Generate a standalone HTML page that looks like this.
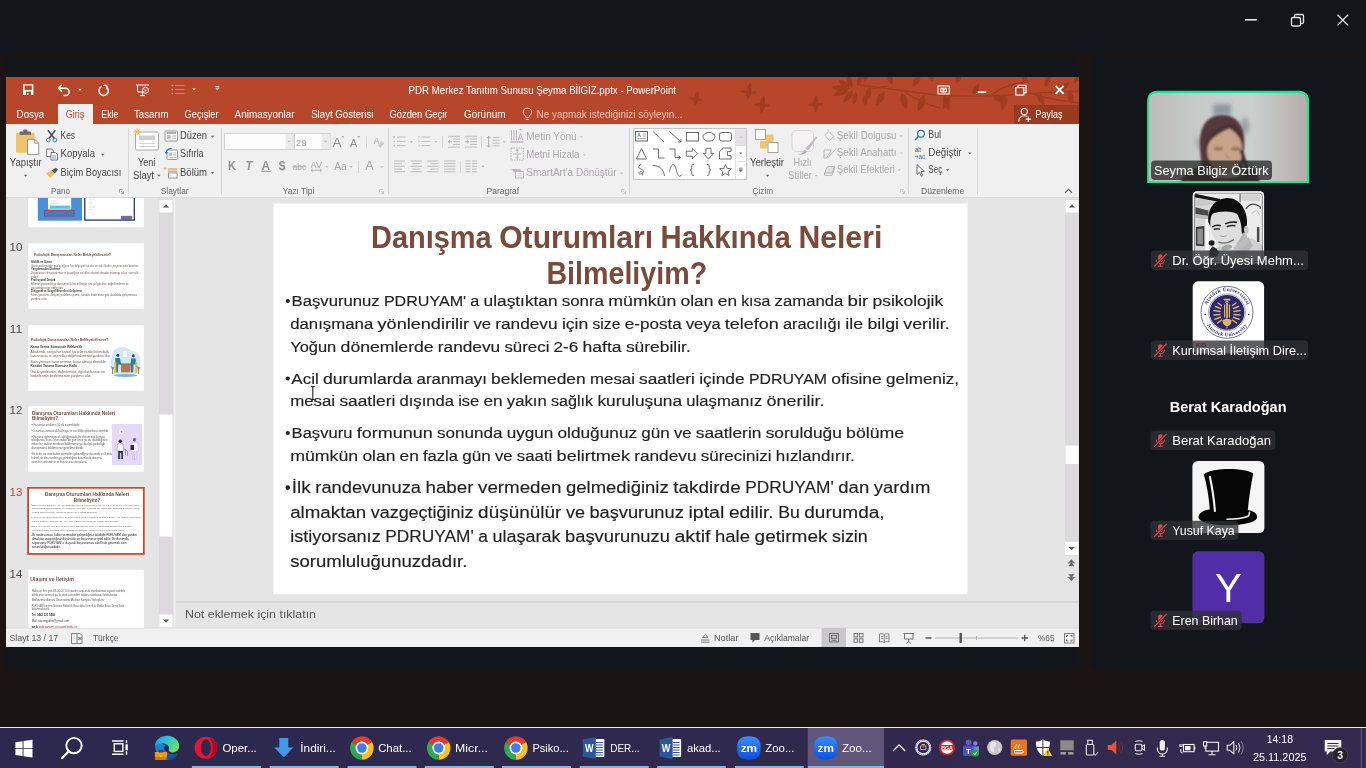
<!DOCTYPE html>
<html lang="tr">
<head>
<meta charset="utf-8">
<title>Zoom Toplantısı</title>
<style>
html,body{margin:0;padding:0;background:#1a1513;}
body{width:1366px;height:768px;overflow:hidden;position:relative;font-family:"Liberation Sans",sans-serif;}
svg#s{position:absolute;left:0;top:0;width:1366px;height:768px;display:block;will-change:transform;font-family:"Liberation Sans",sans-serif;font-size:10.100px;fill:#444;}
text{white-space:pre;}
.ui{fill:#444;}
.dis{fill:#a9a7a9;}
.w{fill:#fff;}
.grp{fill:#666;font-size:11px;}
.nm{fill:#fff;font-size:13.5px;}
.tb{fill:#fff;font-size:14.5px;}
.body{fill:#1c1c1c;}
.ttl{fill:#7a4a3c;font-weight:bold;}
</style>
</head>
<body>
<svg id="s" width="1366" height="768" viewBox="0 0 1366 768">
<!-- base -->
<rect x="0" y="0" width="1366" height="768" fill="#1a1513"/>
<rect x="0" y="0" width="1366" height="52" fill="#12161a"/>
<rect x="6" y="56" width="1073" height="612.800" fill="#12161a"/>
<rect x="1091" y="56" width="275" height="612.800" fill="#12161a"/>
<!-- zoom window controls -->
<g stroke="#e6e6e6" stroke-width="1.3" fill="none">
<line x1="1245" y1="19.8" x2="1257" y2="19.8" stroke-width="1.6"/>
<rect x="1291.5" y="17.5" width="9" height="8.5" rx="1.5"/>
<path d="M1294.5 17.5v-1.5a1.5 1.5 0 0 1 1.5-1.5h6a1.5 1.5 0 0 1 1.5 1.5v6a1.5 1.5 0 0 1-1.5 1.5h-1.5"/>
<path d="M1337.5 14.8l10.6 10.6M1348.1 14.8l-10.6 10.6"/>
</g>
<!-- PowerPoint window base -->
<rect x="6" y="77" width="1073" height="47" fill="#b7472a"/>
<rect x="6" y="124" width="1073" height="74" fill="#f1f0f1"/>
<rect x="6" y="197" width="1073" height="1" fill="#dadada"/>
<rect x="6" y="198" width="1073" height="430" fill="#e5e5e5"/>
<rect x="6" y="628" width="1073" height="19" fill="#f1f0f1"/>
<!-- Share button bg -->
<rect x="1014" y="105" width="65" height="19" fill="#99391f"/>
<!-- active tab -->
<rect x="58" y="104" width="35" height="21" fill="#f1f0f1"/>
<!-- tabs text -->
<g class="w" font-size="10.300">
<text x="16.6" y="118" textLength="27.6" lengthAdjust="spacingAndGlyphs" class="w">Dosya</text>
<text x="65.8" y="118" textLength="18.6" lengthAdjust="spacingAndGlyphs" style="fill:#b7472a">Giriş</text>
<text x="101.3" y="118" textLength="17" lengthAdjust="spacingAndGlyphs" class="w">Ekle</text>
<text x="134" y="118" textLength="34.5" lengthAdjust="spacingAndGlyphs" class="w">Tasarım</text>
<text x="184.6" y="118" textLength="34" lengthAdjust="spacingAndGlyphs" class="w">Geçişler</text>
<text x="234.6" y="118" textLength="60" lengthAdjust="spacingAndGlyphs" class="w">Animasyonlar</text>
<text x="311.2" y="118" textLength="62.2" lengthAdjust="spacingAndGlyphs" class="w">Slayt Gösterisi</text>
<text x="389.4" y="118" textLength="58" lengthAdjust="spacingAndGlyphs" class="w">Gözden Geçir</text>
<text x="464" y="118" textLength="41.5" lengthAdjust="spacingAndGlyphs" class="w">Görünüm</text>
<text x="536.5" y="118" textLength="146" lengthAdjust="spacingAndGlyphs" style="fill:#e9c3b8">Ne yapmak istediğinizi söyleyin...</text>
<text x="1035.6" y="118.3" textLength="26.8" lengthAdjust="spacingAndGlyphs" class="w">Paylaş</text>
</g>
<text x="408.5" y="94" textLength="267.5" lengthAdjust="spacingAndGlyphs" class="w" font-size="10.300">PDR Merkez Tanıtım Sunusu Şeyma BİlGİZ.pptx - PowerPoint</text>
<!-- title bar decorative background (birds and leaves) -->
<clipPath id="tbclip"><rect x="6" y="77" width="1073" height="47"/></clipPath>
<g clip-path="url(#tbclip)" opacity="0.550">
<path fill="#8f3219" d="M688.6 98.2 L691.4 97.4 L693.9 97.7 L695.4 93.8 L698.1 90.9 L698.8 94.4 L698.1 98.4 L702.3 98.9 L702.4 101.1 L698.1 100.8 L696.8 103.6 L694.5 106.6 L693.8 103.0 L693.5 100.0 L691.0 99.5zM740.0 91.4 L743.2 90.3 L746.2 90.5 L747.8 85.9 L750.9 82.3 L751.8 86.5 L751.1 91.2 L756.1 91.6 L756.3 94.2 L751.3 94.0 L749.8 97.3 L747.2 101.0 L746.3 96.8 L745.8 93.2 L742.8 92.8zM753.5 104.8 L756.6 103.6 L759.6 103.6 L761.0 98.9 L763.9 95.2 L765.0 99.3 L764.6 104.1 L769.6 104.2 L769.9 106.7 L764.9 106.8 L763.6 110.2 L761.2 114.0 L760.1 109.9 L759.4 106.3 L756.4 106.1zM807.4 105.0 L810.2 103.5 L813.1 103.4 L814.0 98.8 L816.4 95.0 L817.9 98.8 L817.9 103.4 L822.6 103.1 L823.1 105.5 L818.3 105.9 L817.4 109.2 L815.5 113.0 L814.0 109.2 L813.1 105.9 L810.2 105.9zM848.0 90.0Q842.4 82.4 831.3 87.0Q840.2 95.2 848.0 90.0zM848.0 90.0Q839.9 86.6 833.0 95.5Q844.0 97.8 848.0 90.0zM850.0 89.0Q849.3 80.5 838.5 79.4Q841.5 89.7 850.0 89.0zM852.0 88.0Q855.1 80.5 846.9 73.9Q844.8 84.2 852.0 88.0zM853.0 91.0Q844.5 91.7 843.4 102.5Q853.7 99.5 853.0 91.0zM856.0 92.0Q850.2 96.3 853.7 104.8Q860.0 98.0 856.0 92.0zM858.0 86.0Q864.1 82.7 861.1 74.4Q854.4 80.1 858.0 86.0zM864.0 95.0Q860.3 100.1 865.9 105.8Q869.2 98.6 864.0 95.0zM884.2 91.5Q875.3 93.8 876.2 105.4Q886.6 100.3 884.2 91.5zM901.9 93.1Q896.9 101.5 906.3 109.5Q910.4 97.9 901.9 93.1zM913.1 86.7Q921.3 84.5 920.6 73.7Q911.0 78.5 913.1 86.7zM924.4 94.7Q915.4 99.1 918.3 111.6Q928.5 103.9 924.4 94.7zM943.7 95.5Q939.8 103.8 949.2 110.6Q952.0 99.3 943.7 95.5zM950.2 96.3Q942.0 98.5 942.7 109.3Q952.4 104.5 950.2 96.3zM932.5 81.8Q937.0 75.8 930.2 69.0Q926.2 77.7 932.5 81.8zM956.6 83.4Q963.6 80.4 961.1 71.2Q953.2 76.7 956.6 83.4zM972.7 94.7Q980.1 93.0 979.2 83.5Q970.6 87.5 972.7 94.7zM992.1 96.3Q996.8 104.8 1008.5 100.7Q1000.4 91.3 992.1 96.3zM1005.0 94.7Q997.4 99.9 1002.2 110.5Q1010.2 102.1 1005.0 94.7zM1014.6 93.1Q1022.8 92.7 1023.6 82.4Q1013.6 85.0 1014.6 93.1zM1037.2 92.3Q1035.0 100.5 1044.7 105.3Q1045.4 94.5 1037.2 92.3zM1045.2 86.7Q1052.3 83.3 1050.0 73.5Q1042.0 79.5 1045.2 86.7zM1058.1 91.5Q1066.6 92.2 1069.6 81.9Q1058.8 83.0 1058.1 91.5zM1069.4 90.7Q1064.4 97.2 1071.8 104.5Q1076.3 95.2 1069.4 90.7zM869.7 86.7Q862.8 91.1 867.2 100.5Q874.6 93.2 869.7 86.7zM864.8 81.8Q871.2 77.7 867.1 69.0Q860.3 75.8 864.8 81.8zM892.2 84.2Q895.6 77.5 887.8 72.0Q885.3 81.2 892.2 84.2zM1027.5 83.4Q1029.4 76.8 1021.5 73.0Q1020.8 81.8 1027.5 83.4zM1074.2 83.4Q1080.9 81.8 1080.2 73.0Q1072.3 76.8 1074.2 83.4z"/>
<path d="M860 85C880 88 900 90 920 93S960 97 990 96S1040 92 1080 91" fill="none" stroke="#8f3219" stroke-width="1.500"/>
<path d="M868 90C872 89 880 87 888 86" fill="none" stroke="#8f3219" stroke-width="1.500"/>
<path d="M905 92C915 99 925 104 940 108" fill="none" stroke="#8f3219" stroke-width="1.500"/>
<path d="M990 96C1000 88 1010 84 1025 82" fill="none" stroke="#8f3219" stroke-width="1.500"/>
<path d="M1030 93C1045 99 1060 100 1079 103" fill="none" stroke="#8f3219" stroke-width="1.500"/>
</g>
<!-- QAT icons -->
<g fill="#fff">
<path d="M23 84.3h10.4v10.6H23zM24.6 85.6v4.5h7.2v-4.5zM26 91.6v3.3h1.2v-2h1.2v2h2.6v-3.3z" fill-rule="evenodd"/>
</g>
<g fill="none" stroke="#fff" stroke-width="1.4" stroke-linecap="round" stroke-linejoin="round">
<path d="M61.5 85.3l-3 3 3 3M58.7 88.3h6.8a3.6 3.6 0 0 1 0 7.2h-1.5"/>
<path d="M101.400 86.700a4.700 4.700 0 1 0 5 0.300M103.600 85.400h3.200v3.200"/>
</g>
<path d="M78.2 88.8h3.6l-1.8 2z" fill="#fff"/>
<g fill="none" stroke="#fff" stroke-width="1">
<path d="M136 85h13M137.5 85v7h6M142.5 92v3M140 95.6h5"/>
<circle cx="145.5" cy="90.3" r="3"/>
<path d="M144.7 88.9v2.8l2.2-1.4z" fill="#fff" stroke="none"/>
</g>
<g fill="#cf8a76" stroke="#cf8a76">
<circle cx="172.3" cy="85.5" r="0.9" stroke="none"/><circle cx="172.3" cy="89.5" r="0.9" stroke="none"/><circle cx="172.3" cy="93.5" r="0.9" stroke="none"/>
<path d="M175 85.5h9.5M175 89.5h9.5M175 93.5h9.5" stroke-width="0.9" fill="none"/>
</g>
<path d="M192.3 88.6h3.4l-1.7 1.9z" fill="#fff"/>
<path d="M215.5 86.3h3.8v0.9h-3.8zM215.5 88.3h3.8l-1.9 2.1z" fill="#fff"/>
<!-- window controls -->
<g fill="none" stroke="#fff" stroke-width="1">
<rect x="938" y="86" width="11.2" height="8"/>
<path d="M940.8 88.2h5.6v3.8h-5.6z" fill="#fff" fill-opacity="0.25"/>
<path d="M943.6 92.2v-3.2M942.2 90.2l1.4-1.4 1.4 1.4" stroke-width="0.9"/>
</g>
<rect x="977.7" y="91.4" width="8.5" height="1.6" fill="#fff"/>
<g fill="none" stroke="#fff" stroke-width="1.2">
<rect x="1015.8" y="87.6" width="8" height="7.4"/>
<path d="M1018 87.6v-2.2h8v7.4h-2.2"/>
</g>
<path d="M1055.6 85.8l8 8M1063.6 85.8l-8 8" stroke="#fff" stroke-width="1.9" fill="none"/>
<!-- lightbulb -->
<g fill="none" stroke="#f1cfc5" stroke-width="0.900">
<path d="M525.800 117.600v-1.400c-1.700-1.100-2.500-2.400-2.500-4a4.100 4.100 0 0 1 8.200 0c0 1.600-0.800 2.900-2.500 4v1.400zM525.800 119.500h3.200"/>
</g>
<!-- share person icon -->
<g fill="none" stroke="#fff" stroke-width="1.1">
<circle cx="1024.300" cy="111.600" r="3.100"/>
<path d="M1018.600 122c0.300-4 2.500-6.300 5.700-6.300c1.200 0 2.200 0.300 3 0.900"/>
<path d="M1028.400 116.600v5.200M1025.800 119.200h5.200" stroke-width="1.2"/>
</g>
<!-- Ribbon: Pano + Slaytlar -->
<g stroke="#d8d6d8" stroke-width="1">
<path d="M128.500 128v66M221.500 128v66M388.500 128v66M629.500 128v66M908.500 128v66M977.500 128v66"/>
</g>
<!-- paste icon -->
<rect x="16" y="132.700" width="18.600" height="20" rx="1" fill="#efc36c"/>
<rect x="19.600" y="131.600" width="11.400" height="3.200" rx="0.600" fill="#6a6a6a"/>
<rect x="23.200" y="129.500" width="4.200" height="2.600" rx="0.800" fill="#6a6a6a"/>
<path d="M27.500 139.300h7.300l3.900 3.900v11.300h-11.200z" fill="#fff" stroke="#8a8a8a" stroke-width="0.900"/>
<path d="M34.800 139.300v3.900h3.900" fill="none" stroke="#8a8a8a" stroke-width="0.900"/>
<text x="9.800" y="166.300" textLength="32" lengthAdjust="spacingAndGlyphs">Yapıştır</text>
<path d="M23.800 174.800h3.600l-1.800 2z" fill="#666"/>
<!-- scissors -->
<g fill="none" stroke-width="1">
<path d="M48 130.300l6.300 8.200M55.300 130.300l-6.300 8.200" stroke="#4a4a4a" stroke-width="1.500"/>
<circle cx="48.300" cy="140" r="1.900" stroke="#2b7bd6"/>
<circle cx="54.900" cy="140" r="1.900" stroke="#2b7bd6"/>
</g>
<text x="60.600" y="139.400" textLength="14.400" lengthAdjust="spacingAndGlyphs">Kes</text>
<!-- copy -->
<g fill="#fff" stroke="#666" stroke-width="0.900">
<path d="M46.700 149h5l2 2v5.500h-7z"/>
<path d="M51 152.500h4.500l2 2v5.500h-6.500z"/>
<path d="M52.300 156h3.800M52.300 158h3.800" stroke="#2b7bd6" stroke-width="0.800"/>
</g>
<text x="60.600" y="157.400" textLength="34.400" lengthAdjust="spacingAndGlyphs">Kopyala</text>
<path d="M100.900 153.700h3.600l-1.800 2z" fill="#666"/>
<!-- format painter -->
<path d="M46 173.500l5.500-3 3.500 3-4.500 4.500z" fill="#eebd62"/>
<path d="M51.500 170.500l3.500 3 3-4-2.200-1.800z" fill="#555"/>
<text x="60.600" y="175.600" textLength="60.600" lengthAdjust="spacingAndGlyphs">Biçim Boyacısı</text>
<text x="51" y="193.800" textLength="19" lengthAdjust="spacingAndGlyphs" class="grp" style="font-size:9.700px">Pano</text>
<path d="M119.500 189.500h3M119.500 189.500v3M121 191l2.500 2.500M123.500 191.200v2.300h-2.300" stroke="#8a8a8a" stroke-width="0.800" fill="none"/>
<!-- new slide icon -->
<rect x="135.500" y="132" width="23" height="18" rx="1.500" fill="#fff" stroke="#a8a8a8" stroke-width="1"/>
<rect x="139" y="135.500" width="16" height="4.500" fill="#cfcfcf"/>
<path d="M139 143.500h16M139 146.500h16" stroke="#d4d4d4" stroke-width="1"/>
<g stroke="#f0b840" stroke-width="1"><path d="M137 128.400v7M133.500 131.900h7M134.500 129.400l5 5M139.500 129.400l-5 5"/></g>
<text x="138" y="166.300" textLength="17.200" lengthAdjust="spacingAndGlyphs">Yeni</text>
<text x="133" y="179.300" textLength="21" lengthAdjust="spacingAndGlyphs">Slayt</text>
<path d="M157.200 174.800h3.600l-1.800 2z" fill="#666"/>
<!-- layout icon -->
<rect x="165" y="131" width="12.500" height="10" rx="0.800" fill="#fff" stroke="#8a8a8a" stroke-width="0.900"/>
<path d="M166.500 133h9.500" stroke="#8a8a8a" stroke-width="1.400"/>
<rect x="166.700" y="135.200" width="4" height="4" fill="#bdbdbd"/>
<path d="M172.200 136h3.800M172.200 138.200h3.800" stroke="#9a9a9a" stroke-width="0.800"/>
<text x="180" y="139.400" textLength="27" lengthAdjust="spacingAndGlyphs">Düzen</text>
<path d="M210.700 135.700h3.600l-1.800 2z" fill="#666"/>
<!-- reset icon -->
<rect x="167" y="150" width="10.500" height="9.500" rx="0.800" fill="#fff" stroke="#8a8a8a" stroke-width="0.900"/>
<rect x="168.600" y="152.500" width="3.500" height="3.500" fill="#bdbdbd"/>
<path d="M173.200 153h3M173.200 155h3M168.600 157.600h7.600" stroke="#9a9a9a" stroke-width="0.800"/>
<path d="M166.200 153.500c-0.500-3 2-5.500 5.500-4.800" fill="none" stroke="#2b7bd6" stroke-width="1.200"/>
<path d="M164.500 151.800l1.700 2.500 2.300-1.800z" fill="#2b7bd6"/>
<text x="180" y="157.400" textLength="23.400" lengthAdjust="spacingAndGlyphs">Sıfırla</text>
<!-- section icon -->
<path d="M168 169h9.500M168 171.200h9.500" stroke="#d9822b" stroke-width="0.900"/>
<rect x="168.500" y="173" width="8.500" height="5" fill="#fff" stroke="#8a8a8a" stroke-width="0.900"/>
<path d="M165 167.200v3M163.500 168.700h3" stroke="#f0b840" stroke-width="0.900"/>
<text x="180" y="175.600" textLength="27" lengthAdjust="spacingAndGlyphs">Bölüm</text>
<path d="M210.700 172h3.600l-1.800 2z" fill="#666"/>
<text x="160.800" y="193.800" textLength="27.800" lengthAdjust="spacingAndGlyphs" class="grp" style="font-size:9.700px">Slaytlar</text>
<!-- Ribbon: Yazı Tipi -->
<rect x="224.500" y="133.500" width="68.500" height="16" fill="#fdfdfd" stroke="#d4d2d4" stroke-width="1"/>
<rect x="285.500" y="134" width="7" height="15" fill="#ebebeb"/>
<path d="M287.400 140.800h3.200l-1.600 1.800z" fill="#b5b5b5"/>
<rect x="294.500" y="133.500" width="35.500" height="16" fill="#fdfdfd" stroke="#d4d2d4" stroke-width="1"/>
<rect x="321.500" y="134" width="8" height="15" fill="#ebebeb"/>
<path d="M323.900 140.800h3.200l-1.600 1.800z" fill="#b5b5b5"/>
<text x="295.800" y="145.800" textLength="10.800" lengthAdjust="spacingAndGlyphs" style="fill:#a5a3a5;font-size:9.700px">29</text>
<g class="dis">
<text x="332.600" y="146.600" textLength="9" lengthAdjust="spacingAndGlyphs" style="font-size:13.500px;fill:#8f8d8f">A</text>
<path d="M341.300 137.300l1.500-1.600 1.500 1.600z" fill="#8f8d8f"/>
<text x="350" y="146.600" textLength="7.200" lengthAdjust="spacingAndGlyphs" style="font-size:10.800px;fill:#8f8d8f">A</text>
<path d="M357.400 136.300l1.400 1.500 1.400-1.500z" fill="#8f8d8f"/>
</g>
<path d="M366.500 136v12" stroke="#d8d6d8"/>
<!-- clear formatting -->
<text x="373.600" y="143.500" textLength="6" lengthAdjust="spacingAndGlyphs" style="font-size:9px;fill:#b0aeb0">A</text>
<path d="M377.500 145.500l4-4.500 2.800 2.500-4 4.500z" fill="#cfcdcf"/>
<!-- row 2 -->
<g style="fill:#939193">
<text x="228" y="170" textLength="8" lengthAdjust="spacingAndGlyphs" style="font-size:12px;font-weight:bold">K</text>
<text x="245.500" y="170" textLength="7" lengthAdjust="spacingAndGlyphs" style="font-size:12px;font-weight:bold;font-style:italic">T</text>
<text x="261.600" y="169.600" textLength="8.600" lengthAdjust="spacingAndGlyphs" style="font-size:12px;font-weight:bold">A</text>
<rect x="261" y="170.800" width="9.800" height="1" />
<text x="279.300" y="170.600" textLength="7" lengthAdjust="spacingAndGlyphs" style="font-size:12px;font-weight:bold;fill:#cfcdcf">S</text>
<text x="278.600" y="170" textLength="7" lengthAdjust="spacingAndGlyphs" style="font-size:12px;font-weight:bold">S</text>
<text x="292.800" y="170" textLength="13.200" lengthAdjust="spacingAndGlyphs" style="font-size:9.500px;fill:#b0aeb0">abc</text>
<rect x="292.300" y="166.300" width="14.200" height="0.900" fill="#b0aeb0"/>
<text x="310.600" y="167.500" textLength="11.400" lengthAdjust="spacingAndGlyphs" style="font-size:9px;fill:#a5a3a5">AV</text>
<path d="M311 170.300h10.600M311 170.300l1.600-1.300M311 170.300l1.600 1.300M321.600 170.300l-1.600-1.300M321.600 170.300l-1.600 1.300" stroke="#a5a3a5" stroke-width="0.800" fill="none"/>
<path d="M325.400 166.200h3.200l-1.600 1.800z" fill="#b5b5b5"/>
<text x="334.200" y="170" textLength="12.600" lengthAdjust="spacingAndGlyphs" style="font-size:11.500px;fill:#a5a3a5">Aa</text>
<path d="M349.400 166.200h3.200l-1.600 1.800z" fill="#b5b5b5"/>
<path d="M358.500 161v12" stroke="#d8d6d8"/>
<text x="365.300" y="170" textLength="8.500" lengthAdjust="spacingAndGlyphs" style="font-size:13px;fill:#a5a3a5">A</text>
<path d="M380.100 166.200h3.200l-1.600 1.800z" fill="#b5b5b5"/>
</g>
<text x="282.800" y="193.800" textLength="31.500" lengthAdjust="spacingAndGlyphs" class="grp" style="font-size:9.700px">Yazı Tipi</text>
<path d="M379.500 189.500h3M379.500 189.500v3M381 191l2.500 2.500M383.500 191.200v2.300h-2.300" stroke="#bdbbbd" stroke-width="0.800" fill="none"/>
<!-- Ribbon: Paragraf -->
<g stroke="#b9b7b9" stroke-width="0.900" fill="#b9b7b9">
<circle cx="394.200" cy="137" r="0.900" stroke="none"/><circle cx="394.200" cy="141.300" r="0.900" stroke="none"/><circle cx="394.200" cy="145.600" r="0.900" stroke="none"/>
<path d="M397 137h8.500M397 141.300h8.500M397 145.600h8.500"/>
<path d="M421.500 137h8.700M421.500 141.300h8.700M421.500 145.600h8.700"/>
<path d="M419 136v2.200M419 140.200v2.200M419 144.500v2.200" stroke-width="0.800"/>
</g>
<path d="M409.900 141.300h3.200l-1.600 1.800zM434.300 141.300h3.200l-1.600 1.800zM502.700 141.300h3.200l-1.600 1.800zM481.400 165.800h3.200l-1.600 1.800z" fill="#b5b5b5"/>
<path d="M442.500 136v12M481.500 136v12M460.500 161v12" stroke="#d8d6d8"/>
<g stroke="#b9b7b9" stroke-width="0.900" fill="none">
<path d="M448 136.300h12M453 139h7M453 141.700h7M453 144.400h7M448 147.100h12"/>
<path d="M448.200 141.700h3.800M448.200 141.700l1.700-1.600M448.200 141.700l1.700 1.600" stroke="#a5a3a5"/>
<path d="M465 136.300h12M470 139h7M470 141.700h7M470 144.400h7M465 147.100h12"/>
<path d="M465 141.700h3.800M468.800 141.700l-1.700-1.600M468.800 141.700l-1.700 1.600" stroke="#a5a3a5"/>
<path d="M492.500 137.500h7M492.500 140.300h7M492.500 143.100h7M492.500 145.900h7"/>
<path d="M488.700 136.500v10.500M488.700 136.300l-1.700 1.900M488.700 136.300l1.700 1.900M488.700 147.200l-1.700-1.900M488.700 147.200l1.700-1.900" stroke="#a5a3a5"/>
<!-- alignment -->
<path d="M394 161h11M394 163.700h8M394 166.400h11M394 169.100h8M394 171.800h11"/>
<path d="M410.500 161h11.500M412.300 163.700h8M410.500 166.400h11.500M412.300 169.100h8M410.500 171.800h11.500"/>
<path d="M427 161h11.500M430.500 163.700h8M427 166.400h11.500M430.500 169.100h8M427 171.800h11.500"/>
<path d="M444 161h11.500M444 163.700h11.500M444 166.400h11.500M444 169.100h11.500M444 171.800h11.500"/>
<path d="M465.500 161h5M472 161h5M465.500 163.700h5M472 163.700h5M465.500 166.400h5M472 166.400h5M465.500 169.100h5M472 169.100h5M465.500 171.800h5M472 171.800h5"/>
</g>
<!-- Metin Yonu -->
<g stroke="#b0aeb0" stroke-width="0.900" fill="none">
<path d="M511.500 130v10.500M514 130v10.500M516.500 130v10.500M510.500 142h13" />
<path d="M510.500 142h13" stroke-dasharray="1.200 1"/>
<path d="M518.200 140.500l2.300-7 2.300 7M519 138.200h3"/>
<path d="M520.500 130.500v-1.500M519.500 130l1 -1.200 1 1.200" />
<rect x="511" y="148" width="12.500" height="12" stroke-dasharray="1.500 1"/>
<path d="M517.200 149.500v3.500M515.700 151l1.500-1.700 1.500 1.700M517.200 158.500v-3.500M515.700 157l1.500 1.700 1.500-1.700M513 154h8.500"/>
</g>
<path d="M511 169h9l3.500 3.500h-9z" fill="#bdbbbd"/>
<rect x="515.500" y="171.500" width="8" height="6.500" fill="#f7f7f7" stroke="#b0aeb0" stroke-width="0.900"/>
<path d="M517 173.800h5M517 175.800h5" stroke="#c5c3c5" stroke-width="0.700"/>
<g class="dis">
<text x="526.300" y="139.800" textLength="50.300" lengthAdjust="spacingAndGlyphs" class="dis">Metin Yönü</text>
<text x="526.300" y="157.900" textLength="53.200" lengthAdjust="spacingAndGlyphs" class="dis">Metni Hizala</text>
<text x="526.300" y="176.200" textLength="90.200" lengthAdjust="spacingAndGlyphs" class="dis">SmartArt'a Dönüştür</text>
</g>
<path d="M579.600 136.300h3.200l-1.600 1.800zM582.900 154.300h3.200l-1.600 1.800zM620 172.600h3.200l-1.600 1.800z" fill="#c5c3c5"/>
<text x="486.600" y="194" textLength="32.400" lengthAdjust="spacingAndGlyphs" class="grp" style="font-size:9.700px">Paragraf</text>
<path d="M621.500 189.500h3M621.500 189.500v3M623 191l2.500 2.500M625.500 191.200v2.300h-2.300" stroke="#bdbbbd" stroke-width="0.800" fill="none"/>
<!-- Ribbon: Çizim -->
<rect x="633.500" y="128.500" width="113" height="51" fill="#fff" stroke="#c6c4c6" stroke-width="1"/>
<rect x="735.500" y="129" width="10.500" height="16.500" fill="#e4e2e4"/>
<path d="M735.500 129v50M735.500 145.500h11M735.500 161.500h11" stroke="#dcdadc" stroke-width="0.800" fill="none"/>
<path d="M739.200 137.800h3.200l-1.600-1.800z" fill="#c5c3c5"/>
<path d="M739.200 152.500h3.200l-1.600 1.800z" fill="#666"/>
<path d="M739 168.200h3.600M739.200 169.800h3.200l-1.600 1.800z" fill="#666" stroke="#666" stroke-width="0.800"/>
<g fill="none" stroke="#5e5e5e" stroke-width="0.900">
<!-- row1 -->
<rect x="635.500" y="131.500" width="12" height="9.500" stroke="#555"/>
<path d="M642.500 134h3.700M642.500 136h3.700M637 138.600h9.200" stroke="#8a8a8a" stroke-width="0.700"/>
<path d="M653 131.500l11 10.500"/>
<path d="M669.500 131.500l11.500 10.500M681 142v-3M681 142h-3"/>
<rect x="686.500" y="132.500" width="12" height="8.500"/>
<ellipse cx="709" cy="136.800" rx="6" ry="4.400"/>
<rect x="719.500" y="132.500" width="12" height="8.500" rx="2"/>
<!-- row2 -->
<path d="M641.500 148.500l-5 10.500h10z"/>
<path d="M653 149h5.500v9h6"/>
<path d="M669.500 149h5.500v8.500h5.500M680.500 157.500l-1.800-1.800M680.500 157.500l-1.800 1.800"/>
<path d="M686.300 151.200h6v-2.700l5.200 5.200-5.200 5.200v-2.700h-6z"/>
<path d="M706 148.300h5v5h2.800l-5.300 5.700-5.300-5.700h2.800z"/>
<path d="M719.500 159v-7.500l4-3.500h7.500v3.500h-3.500v4h3.500v3.500z" stroke-linejoin="round"/>
<!-- row3 -->
<path d="M641 164.500c-3 1.500-3 3.500 0 4.500s3.500 4-0.500 5c-2 0.500-2.200-1.800-0.300-2.200c2.300-0.400 3.300 1.200 2.300 3.700"/>
<path d="M652.500 165.500c7 0 11 3.500 12 10.500"/>
<path d="M669.500 171.500c2-9 5-9 7-1s4 6 5 4"/>
<path d="M694 164.500c-2.200 0-2.200 1-2.200 2.500s0 2.800-1.600 3c1.600 0.200 1.600 1.500 1.600 3s0 2.500 2.200 2.500"/>
<path d="M707 164.500c2.200 0 2.200 1 2.200 2.500s0 2.800 1.600 3c-1.600 0.200-1.600 1.500-1.600 3s0 2.500-2.200 2.500"/>
<path d="M725.500 164.500l1.600 3.900 4.200 0.300-3.200 2.700 1 4.100-3.600-2.200-3.600 2.200 1-4.100-3.200-2.700 4.200-0.300z" stroke-linejoin="round"/>
</g>
<text x="637.300" y="136.600" style="font-size:5px;fill:#2b7bd6;font-weight:bold">A</text>
<!-- Yerleştir -->
<rect x="755.500" y="129.500" width="10" height="10" fill="#fff" stroke="#9a9a9a" stroke-width="0.900"/>
<rect x="766" y="134.500" width="7.500" height="7.500" fill="#f0c56e"/>
<rect x="760" y="141" width="7.500" height="7.500" fill="#f0c56e"/>
<rect x="768" y="142.500" width="10" height="10" fill="#fff" stroke="#9a9a9a" stroke-width="0.900"/>
<text x="750" y="165.800" textLength="34" lengthAdjust="spacingAndGlyphs">Yerleştir</text>
<path d="M765.800 174.800h3.600l-1.800 2z" fill="#666"/>
<!-- Hızlı Stiller -->
<rect x="792" y="130.500" width="21.500" height="21" rx="4.500" fill="#f5f2f4" stroke="#d7d5d7" stroke-width="1"/>
<path d="M798 154.500c3-0.500 5-2 6.500-5l2.500 2c-2 3-5 3.700-9 3z" fill="#b5b3b5"/>
<path d="M805.500 148.500l10.500-12 1.200 1-9 13z" fill="#bdbbbd"/>
<g class="dis">
<text x="793.400" y="165.800" textLength="18.200" lengthAdjust="spacingAndGlyphs" class="dis">Hızlı</text>
<text x="788" y="179.300" textLength="24" lengthAdjust="spacingAndGlyphs" class="dis">Stiller</text>
</g>
<path d="M814.400 175h3.200l-1.600 1.800z" fill="#c5c3c5"/>
<!-- shape fill/outline/effects icons -->
<g fill="none" stroke="#b0aeb0" stroke-width="0.900">
<path d="M825 135.500l4-4 5 5-4.500 4z"/>
<path d="M828 131v-1.500"/>
<path d="M824 150h7.500l-5 8h-2.500z"/>
<path d="M827.500 158l8-8.500"/>
<path d="M824.500 173l3-6.500h7l-2.500 6.500z" fill="#e4e2e4"/>
<path d="M824.500 173v2.300h7.500l2.500-6.500v-2.300" />
</g>
<path d="M834 137.500q1 1.500 0 2.500q-1-1 0-2.500z" fill="#b0aeb0"/>
<g class="dis">
<text x="836.800" y="138.700" textLength="59.700" lengthAdjust="spacingAndGlyphs" class="dis">Şekil Dolgusu</text>
<text x="836.800" y="155.900" textLength="59.700" lengthAdjust="spacingAndGlyphs" class="dis">Şekil Anahattı</text>
<text x="836.800" y="172.700" textLength="57.900" lengthAdjust="spacingAndGlyphs" class="dis">Şekil Efektleri</text>
</g>
<path d="M899.600 135.200h3.200l-1.600 1.800zM899.600 152.400h3.200l-1.600 1.800zM897.800 169.200h3.200l-1.600 1.800z" fill="#c5c3c5"/>
<text x="752.600" y="194.200" textLength="20.400" lengthAdjust="spacingAndGlyphs" class="grp" style="font-size:9.700px">Çizim</text>
<path d="M900.500 189.500h3M900.500 189.500v3M902 191l2.500 2.500M904.500 191.200v2.300h-2.300" stroke="#bdbbbd" stroke-width="0.800" fill="none"/>
<!-- Ribbon: Düzenleme -->
<circle cx="921" cy="133.800" r="3.400" fill="none" stroke="#2b6cb8" stroke-width="1.200"/>
<path d="M918.600 136.300l-3.600 3.800" stroke="#2b6cb8" stroke-width="1.500" fill="none"/>
<text x="928.300" y="138.400" textLength="12.700" lengthAdjust="spacingAndGlyphs">Bul</text>
<text x="915" y="152.300" style="font-size:6.500px;fill:#555" textLength="6.500" lengthAdjust="spacingAndGlyphs">ab</text>
<text x="918.500" y="158.800" style="font-size:6.500px;fill:#2b6cb8" textLength="6.500" lengthAdjust="spacingAndGlyphs">ac</text>
<path d="M914.800 156.500h3M916.600 155.200l1.400 1.300-1.400 1.300" stroke="#2b6cb8" stroke-width="0.700" fill="none"/>
<text x="928.300" y="155.900" textLength="33.300" lengthAdjust="spacingAndGlyphs">Değiştir</text>
<path d="M967.900 152.400h3.600l-1.800 2z" fill="#666"/>
<path d="M917 164.500v10l2.500-2.300 1.800 4 1.400-0.600-1.800-4h3.400z" fill="#fff" stroke="#555" stroke-width="0.900" stroke-linejoin="round"/>
<text x="928.300" y="172.500" textLength="13.900" lengthAdjust="spacingAndGlyphs">Seç</text>
<path d="M945.900 169.200h3.600l-1.800 2z" fill="#666"/>
<text x="921" y="194.200" textLength="43.200" lengthAdjust="spacingAndGlyphs" class="grp" style="font-size:9.700px">Düzenleme</text>
<path d="M1065 192.800l3.500-3.500 3.500 3.500" fill="none" stroke="#666" stroke-width="1.300"/>
<!-- thumbnail pane scrollbar -->
<rect x="159" y="199" width="14" height="429" fill="#dcdadc"/>
<rect x="159.500" y="200" width="13" height="12.500" fill="#fff"/>
<path d="M162.800 207.500h6.400l-3.200-3.200z" fill="#555"/>
<rect x="159.500" y="414.500" width="13" height="122" fill="#fff"/>
<rect x="159.500" y="614.500" width="13" height="13" fill="#fff"/>
<path d="M162.800 619.500h6.400l-3.200 3.200z" fill="#555"/>
<rect x="174" y="198" width="1.500" height="430" fill="#efefef"/>
<!-- right scrollbar -->
<rect x="1065" y="199" width="14" height="357" fill="#dcdadc"/>
<rect x="1065.500" y="200" width="13" height="12.500" fill="#fff"/>
<path d="M1068.800 207.500h6.400l-3.200-3.200z" fill="#555"/>
<rect x="1065.500" y="445.500" width="13" height="18.500" fill="#fff"/>
<rect x="1065" y="541.800" width="13.500" height="13.200" fill="#fff"/>
<path d="M1068.300 547h6.400l-3.200 3.200z" fill="#555"/>
<path d="M1068.200 562.800l3.200-3.600 3.200 3.600zM1068.200 566.200l3.200-3.600 3.200 3.600zM1068.200 574.200l3.200 3.600 3.200-3.600zM1068.200 577.600l3.200 3.600 3.200-3.600z" fill="#666"/>
<path d="M1067.500 563h7.800M1067.500 577.400h7.800" stroke="#666" stroke-width="0.700"/>
<!-- notes -->
<rect x="176" y="601.500" width="903" height="1" fill="#c9c7c9"/>
<text x="185" y="618" textLength="131" lengthAdjust="spacingAndGlyphs" style="font-size:10.500px;fill:#555">Not eklemek için tıklatın</text>
<!-- status bar -->
<rect x="6" y="627.500" width="1073" height="1" fill="#dcdadc"/>
<text x="9.500" y="641" textLength="48.700" lengthAdjust="spacingAndGlyphs" style="font-size:9.800px;fill:#555">Slayt 13 / 17</text>
<g fill="none" stroke="#777" stroke-width="0.900"><path d="M71.500 633.500h5.500v10h-5.500zM77 633.500h3l2 2v8h-5"/><path d="M78.500 637l3 3M81.500 637l-3 3" stroke="#555"/></g>
<text x="93" y="641" textLength="25.500" lengthAdjust="spacingAndGlyphs" style="font-size:9.800px;fill:#555">Türkçe</text>
<g fill="none" stroke="#666" stroke-width="0.900"><path d="M701 640h8.500M701 642.200h8.500M702.500 637.500h5.500l-2.700-3z"/></g>
<text x="713.900" y="641.300" textLength="24.600" lengthAdjust="spacingAndGlyphs" style="font-size:9.200px;fill:#555">Notlar</text>
<path d="M750.500 633h9v7h-4.500l-2.500 2.800v-2.800h-2z" fill="#555"/>
<text x="764.300" y="641.300" textLength="44.900" lengthAdjust="spacingAndGlyphs" style="font-size:9.200px;fill:#555">Açıklamalar</text>
<rect x="821.500" y="628" width="24.500" height="19" fill="#c9c7c9"/>
<g fill="none" stroke="#666" stroke-width="0.900">
<rect x="829.500" y="633.500" width="9" height="8.500"/><rect x="831.500" y="635.500" width="5" height="3"/><path d="M831.500 640.300h5"/>
<rect x="854" y="633.500" width="3.600" height="3.400"/><rect x="859.400" y="633.500" width="3.600" height="3.400"/><rect x="854" y="638.800" width="3.600" height="3.400"/><rect x="859.400" y="638.800" width="3.600" height="3.400"/>
<path d="M884.200 634.500c-1.500-1-3-1-4.700-0.500v8c1.700-0.500 3.200-0.500 4.700 0.500c1.500-1 3-1 4.700-0.500v-8c-1.700-0.500-3.200-0.500-4.700 0.500v8M881 636.500h2M881 638.500h2M885.500 636.500h2M885.500 638.500h2" stroke-width="0.800"/>
<path d="M903.500 633.500h10.500M904.500 633.500v5.500h8.500v-5.500M908.700 639v2.500M906.500 643.500l2.200-2 2.200 2"/>
</g>
<path d="M925.500 638h6M1021.500 638h6.500M1024.700 634.700v6.600" stroke="#555" stroke-width="1.300" fill="none"/>
<path d="M935 638h83" stroke="#a5a3a5" stroke-width="0.800"/>
<path d="M976.500 636v4" stroke="#a5a3a5" stroke-width="0.800"/>
<rect x="959.500" y="633" width="2.400" height="10" fill="#555"/>
<text x="1038" y="641.300" textLength="16.600" lengthAdjust="spacingAndGlyphs" style="font-size:9.200px;fill:#555">%65</text>
<g fill="none" stroke="#777" stroke-width="0.900"><rect x="1064.500" y="633.500" width="9.500" height="9.500"/><path d="M1066.500 637v-1.500h1.500M1072 637v-1.500h-1.500M1066.500 639.500v1.500h1.500M1072 639.500v1.500h-1.500" stroke="#555"/></g>
<!-- slide thumbnails -->
<clipPath id="thclip"><rect x="6" y="198" width="153" height="430"/></clipPath>
<g clip-path="url(#thclip)">
<rect x="28.100" y="190" width="115.900" height="37.400" fill="#f4f4f4"/>
<rect x="28.600" y="190" width="115" height="36.900" fill="#fff"/>
<rect x="37.800" y="190" width="44.200" height="30.700" fill="#4a90d9"/>
<rect x="48" y="190" width="23.200" height="19.600" fill="#fff"/>
<rect x="49.700" y="205.600" width="20.700" height="3.200" fill="#5ec3e0"/>
<path d="M50.500 201h6M50.500 203.300h9" stroke="#c9c9c9" stroke-width="0.600"/>
<rect x="44.500" y="210.300" width="29.600" height="5.800" fill="#3f7fc4" stroke="#c0324a" stroke-width="0.800"/>
<rect x="84.800" y="190" width="49.500" height="30.100" fill="#fff" stroke="#1f3a63" stroke-width="1.300"/>
<path d="M89 199h5M89 203h4M89 207h6M89 209.500h3" stroke="#d2d2d2" stroke-width="0.600"/>
<rect x="121.600" y="216.200" width="10.200" height="3.200" fill="#3f7fc4" stroke="#c0324a" stroke-width="0.700"/>
<rect x="28.100" y="243.1" width="115.900" height="65.900" fill="#f4f4f4"/>
<rect x="28.600" y="243.6" width="115" height="65" fill="#fff"/>
<text x="9.600" y="251.3" textLength="12.800" lengthAdjust="spacingAndGlyphs" style="font-size:11.500px;fill:#4a4a4a">10</text>
<text x="34.1" y="256.2" textLength="76.9" lengthAdjust="spacingAndGlyphs" style="font-size:4.4px;fill:#7b4a3b;font-weight:bold;">Psikolojik Danışmandan Neler Bekleyebilirsiniz?</text>
<text x="31.1" y="263.0" textLength="21.0" lengthAdjust="spacingAndGlyphs" style="font-size:2.7px;fill:#333;font-weight:bold;">Gizlilik ve Güven</text>
<text x="31.1" y="266.8" textLength="107.7" lengthAdjust="spacingAndGlyphs" style="font-size:2.7px;fill:#6a5a5a;">Görüşmelerinizde paylaştığınız her bilgi gizli tutulur ve etik ilkeler çerçevesinde korunur.</text>
<text x="31.1" y="270.3" textLength="28.9" lengthAdjust="spacingAndGlyphs" style="font-size:2.7px;fill:#333;font-weight:bold;">Yargılamadan Dinleme</text>
<text x="31.1" y="274.1" textLength="107.4" lengthAdjust="spacingAndGlyphs" style="font-size:2.7px;fill:#6a5a5a;">Duygularınızı, düşüncelerinizi ve yaşadığınız zorlukları eleştirel olmadan anlamaya çalışır, size eşlik</text>
<text x="31.1" y="277.5" textLength="7.4" lengthAdjust="spacingAndGlyphs" style="font-size:2.7px;fill:#6a5a5a;">eder.</text>
<text x="31.1" y="281.3" textLength="24.2" lengthAdjust="spacingAndGlyphs" style="font-size:2.7px;fill:#333;font-weight:bold;">Profesyonel Destek</text>
<text x="31.1" y="285.0" textLength="97.4" lengthAdjust="spacingAndGlyphs" style="font-size:2.7px;fill:#6a5a5a;">Bilimsel yöntemler ve danışmanlık becerileriyle size yol gösterir, değerlendirme ve</text>
<text x="31.1" y="288.8" textLength="32.9" lengthAdjust="spacingAndGlyphs" style="font-size:2.7px;fill:#6a5a5a;">yaşantılarınızı netleştirir.</text>
<text x="31.1" y="292.1" textLength="50.9" lengthAdjust="spacingAndGlyphs" style="font-size:2.7px;fill:#333;font-weight:bold;">Duygusal ve Sosyal Becerileri Geliştirme</text>
<text x="31.1" y="295.8" textLength="105.9" lengthAdjust="spacingAndGlyphs" style="font-size:2.7px;fill:#6a5a5a;">Stres yönetimi, iletişim, problem çözme, kendini ifade etme gibi alanlarda gelişmenize</text>
<text x="31.1" y="299.5" textLength="16.4" lengthAdjust="spacingAndGlyphs" style="font-size:2.7px;fill:#6a5a5a;">yardımcı olur.</text>
<rect x="28.100" y="324.9" width="115.900" height="65.900" fill="#f4f4f4"/>
<rect x="28.600" y="325.4" width="115" height="65" fill="#fff"/>
<text x="9.600" y="333.1" textLength="12.800" lengthAdjust="spacingAndGlyphs" style="font-size:11.500px;fill:#4a4a4a">11</text>
<text x="30.9" y="340.7" textLength="77.4" lengthAdjust="spacingAndGlyphs" style="font-size:4.4px;fill:#7b4a3b;font-weight:bold;">Psikolojik Danışmandan Neler Bekleyebilirsiniz?</text>
<text x="30.5" y="348.3" textLength="51.5" lengthAdjust="spacingAndGlyphs" style="font-size:3.6px;fill:#333;font-weight:bold;">Karar Verme Sürecinde Rehberlik</text>
<text x="30.5" y="353.4" textLength="78.5" lengthAdjust="spacingAndGlyphs" style="font-size:3.3px;fill:#6a5a5a;">Akademik, sosyal ve kişisel kararlarınızda farkındalık</text>
<text x="30.5" y="357.0" textLength="79.9" lengthAdjust="spacingAndGlyphs" style="font-size:3.3px;fill:#6a5a5a;">kazanmanıza ve seçenekleri değerlendirmenize yardımcı olur.</text>
<text x="30.5" y="362.5" textLength="76.1" lengthAdjust="spacingAndGlyphs" style="font-size:3.3px;fill:#6a5a5a;">Sizin yerinize karar vermez; karar almayı destekler</text>
<text x="30.5" y="367.4" textLength="46.5" lengthAdjust="spacingAndGlyphs" style="font-size:3.6px;fill:#333;font-weight:bold;">Kendini Tanıma Sürecine Katkı</text>
<text x="30.5" y="373.0" textLength="74.5" lengthAdjust="spacingAndGlyphs" style="font-size:3.3px;fill:#6a5a5a;">Güçlü yönlerinizi, değerlerinizi, ilgi alanlarınızı ve</text>
<text x="30.5" y="376.8" textLength="61.0" lengthAdjust="spacingAndGlyphs" style="font-size:3.3px;fill:#6a5a5a;">hedeflerinizi keşfetmenize yardımcı olur.</text>
<path d="M113 352c3-6 12-6 16-3s10 2 11 9s-1 14-6 17s-14 3-19 0s-5-17-2-23z" fill="#d5e6f6"/>
<rect x="122.500" y="350.500" width="5" height="7" fill="#fff" stroke="#b9cfe6" stroke-width="0.400"/>
<rect x="120" y="363.500" width="11.500" height="1.300" fill="#8a5a3c"/><rect x="121" y="364.800" width="9.500" height="7.500" fill="#b07a50"/>
<circle cx="117.800" cy="355.300" r="1.500" fill="#2f4858"/><path d="M115.300 358h4.600l1.400 6.500h-3l-0.500 8h-2l-0.500-8z" fill="#2f7f8f"/><path d="M114.300 362h2v11h-2z" fill="#f0b840"/>
<circle cx="133.300" cy="355.800" r="1.500" fill="#2f4858"/><path d="M131 358.500h4.600l0.500 6h-2.500l-0.500 8h-2l-0.500-8z" fill="#2f7f8f"/><path d="M135.300 362h2v11h-2z" fill="#f0b840"/>
<path d="M112.500 374v-7M112.500 369l-1.500-3M112.500 370l1.500-3M138.500 374v-7M138.500 369l-1.500-3M138.500 370l1.500-3" stroke="#3f8f6f" stroke-width="0.800" fill="none"/>
<ellipse cx="125.500" cy="375.500" rx="12" ry="1.500" fill="#7fb3e6"/>
<rect x="28.100" y="406.1" width="115.900" height="65.900" fill="#f4f4f4"/>
<rect x="28.600" y="406.6" width="115" height="65" fill="#fff"/>
<text x="9.600" y="414.3" textLength="12.800" lengthAdjust="spacingAndGlyphs" style="font-size:11.500px;fill:#4a4a4a">12</text>
<text x="32.0" y="414.9" textLength="83.0" lengthAdjust="spacingAndGlyphs" style="font-size:5.3px;fill:#7b4a3b;font-weight:bold;">Danışma Oturumları Hakkında Neleri</text>
<text x="32.0" y="420.2" textLength="26.1" lengthAdjust="spacingAndGlyphs" style="font-size:5.3px;fill:#7b4a3b;font-weight:bold;">Bilmeliyim?</text>
<text x="31.5" y="426.3" textLength="48.5" lengthAdjust="spacingAndGlyphs" style="font-size:2.9px;fill:#5a5a5a;">•Oturumlar ortalama 50 dk sürmektedir.</text>
<text x="31.5" y="431.8" textLength="77.5" lengthAdjust="spacingAndGlyphs" style="font-size:2.9px;fill:#5a5a5a;">•Oturumlara zamanında katılmaya ve sürekliliğe gösterilmesi önemlidir.</text>
<text x="31.5" y="437.5" textLength="73.5" lengthAdjust="spacingAndGlyphs" style="font-size:2.9px;fill:#5a5a5a;">•Oturuma gelemeyecek olduğunuzda bir durum söz konusu</text>
<text x="31.5" y="441.3" textLength="76.0" lengthAdjust="spacingAndGlyphs" style="font-size:2.9px;fill:#5a5a5a;">olduğunda, bunu oturumdan bir gün önce ya da olabildiğince</text>
<text x="31.5" y="445.1" textLength="73.5" lengthAdjust="spacingAndGlyphs" style="font-size:2.9px;fill:#5a5a5a;">erken bir vakitte merkeze bildirmeniz ya da ilgili psikolojik</text>
<text x="31.5" y="449.3" textLength="52.5" lengthAdjust="spacingAndGlyphs" style="font-size:2.9px;fill:#5a5a5a;">danışmana bildirmeniz gerekmektedir.</text>
<text x="31.5" y="454.8" textLength="80.5" lengthAdjust="spacingAndGlyphs" style="font-size:2.9px;fill:#5a5a5a;">•İki sefer üst üste haber vermeden gelmediğiniz durumda ve 3 defa</text>
<text x="31.5" y="459.1" textLength="70.5" lengthAdjust="spacingAndGlyphs" style="font-size:2.9px;fill:#5a5a5a;">haberli de olsa randevuya gelmediğiniz durumlarda danışma</text>
<text x="31.5" y="463.2" textLength="55.3" lengthAdjust="spacingAndGlyphs" style="font-size:2.9px;fill:#5a5a5a;">süreciniz sonlandırılır ve başvurunuz dosyalanır.</text>
<rect x="112" y="424" width="30" height="41" fill="#e2daf6"/>
<circle cx="121.500" cy="431.700" r="2.600" fill="#fff"/><circle cx="121.500" cy="431.700" r="1" fill="#8a8aa8"/>
<circle cx="120.300" cy="441.300" r="1.700" fill="#2a2a48"/><path d="M117.500 443.800h5.600l0.500 7h-2l0 8h-1.200l-0.500-6l-0.500 6h-1.200l0-8h-1.200z" fill="#fff" stroke="#2a2a48" stroke-width="0.300"/><path d="M118.300 451h4.600v8h-1.500v-6h-1.600v6h-1.500z" fill="#2a2a48"/>
<circle cx="134.500" cy="439.800" r="1.700" fill="#6a5acd"/><path d="M132 442.300h5.600l1 9h-2.500v8h-1.200v-8h-1v8h-1.200v-8h-1.700z" fill="#f7f5ff" stroke="#9a8adf" stroke-width="0.300"/><rect x="130.500" y="445" width="3.500" height="5" fill="#2a2a48"/>
<path d="M125.500 455v-6M125.500 451l-1.500-2.500M125.500 452l1.500-2.500M127.500 456v-5" stroke="#8a7ad8" stroke-width="0.700" fill="none"/>
<rect x="27.200" y="487.0" width="117.500" height="67.800" fill="#c8472a"/>
<rect x="29" y="488.7" width="114" height="64.400" fill="#fff"/>
<text x="9.600" y="496.3" textLength="12.800" lengthAdjust="spacingAndGlyphs" style="font-size:11.500px;fill:#c8472a">13</text>
<g transform="translate(29,488.700) scale(0.164500) translate(-274,-204)">
<g style="font-weight:bold;font-size:32px;fill:#7b4a3b">
<text y="248.2"><tspan x="371.0" textLength="120.7" lengthAdjust="spacingAndGlyphs">Danışma</tspan> <tspan x="499.2" textLength="153.9" lengthAdjust="spacingAndGlyphs">Oturumları</tspan> <tspan x="660.6" textLength="130.2" lengthAdjust="spacingAndGlyphs">Hakkında</tspan> <tspan x="798.4" textLength="83.9" lengthAdjust="spacingAndGlyphs">Neleri</tspan></text>
<text y="284.3"><tspan x="546.4" textLength="160.8" lengthAdjust="spacingAndGlyphs">Bilmeliyim?</tspan></text>
</g>
<g style="font-size:15.500px;fill:#666">
<circle cx="287.800" cy="301.0" r="2.100" stroke="none"/>
<text y="306.4"><tspan x="291.6" textLength="88.1" lengthAdjust="spacingAndGlyphs">Başvurunuz</tspan> <tspan x="383.9" textLength="82.2" lengthAdjust="spacingAndGlyphs">PDRUYAM'</tspan> <tspan x="470.3" textLength="9.0" lengthAdjust="spacingAndGlyphs">a</tspan> <tspan x="483.6" textLength="74.0" lengthAdjust="spacingAndGlyphs">ulaştıktan</tspan> <tspan x="561.8" textLength="42.2" lengthAdjust="spacingAndGlyphs">sonra</tspan> <tspan x="608.3" textLength="68.0" lengthAdjust="spacingAndGlyphs">mümkün</tspan> <tspan x="680.5" textLength="33.0" lengthAdjust="spacingAndGlyphs">olan</tspan> <tspan x="717.8" textLength="19.2" lengthAdjust="spacingAndGlyphs">en</tspan> <tspan x="741.2" textLength="29.1" lengthAdjust="spacingAndGlyphs">kısa</tspan> <tspan x="774.6" textLength="68.7" lengthAdjust="spacingAndGlyphs">zamanda</tspan> <tspan x="847.6" textLength="20.7" lengthAdjust="spacingAndGlyphs">bir</tspan> <tspan x="872.5" textLength="70.7" lengthAdjust="spacingAndGlyphs">psikolojik</tspan></text>
<text y="329.0"><tspan x="290.2" textLength="83.1" lengthAdjust="spacingAndGlyphs">danışmana</tspan> <tspan x="377.5" textLength="91.6" lengthAdjust="spacingAndGlyphs">yönlendirilir</tspan> <tspan x="473.4" textLength="17.6" lengthAdjust="spacingAndGlyphs">ve</tspan> <tspan x="495.2" textLength="62.4" lengthAdjust="spacingAndGlyphs">randevu</tspan> <tspan x="561.9" textLength="26.4" lengthAdjust="spacingAndGlyphs">için</tspan> <tspan x="592.5" textLength="27.9" lengthAdjust="spacingAndGlyphs">size</tspan> <tspan x="624.7" textLength="57.0" lengthAdjust="spacingAndGlyphs">e-posta</tspan> <tspan x="685.9" textLength="34.7" lengthAdjust="spacingAndGlyphs">veya</tspan> <tspan x="724.8" textLength="53.9" lengthAdjust="spacingAndGlyphs">telefon</tspan> <tspan x="783.0" textLength="58.1" lengthAdjust="spacingAndGlyphs">aracılığı</tspan> <tspan x="845.3" textLength="17.9" lengthAdjust="spacingAndGlyphs">ile</tspan> <tspan x="867.4" textLength="31.6" lengthAdjust="spacingAndGlyphs">bilgi</tspan> <tspan x="903.3" textLength="46.4" lengthAdjust="spacingAndGlyphs">verilir.</tspan></text>
<text y="351.5"><tspan x="290.2" textLength="46.1" lengthAdjust="spacingAndGlyphs">Yoğun</tspan> <tspan x="340.6" textLength="93.0" lengthAdjust="spacingAndGlyphs">dönemlerde</tspan> <tspan x="437.8" textLength="62.4" lengthAdjust="spacingAndGlyphs">randevu</tspan> <tspan x="504.4" textLength="45.0" lengthAdjust="spacingAndGlyphs">süreci</tspan> <tspan x="553.6" textLength="24.7" lengthAdjust="spacingAndGlyphs">2-6</tspan> <tspan x="582.6" textLength="39.0" lengthAdjust="spacingAndGlyphs">hafta</tspan> <tspan x="625.9" textLength="64.9" lengthAdjust="spacingAndGlyphs">sürebilir.</tspan></text>
<circle cx="287.800" cy="378.5" r="2.100" stroke="none"/>
<text y="383.8"><tspan x="291.3" textLength="27.4" lengthAdjust="spacingAndGlyphs">Acil</tspan> <tspan x="322.9" textLength="89.4" lengthAdjust="spacingAndGlyphs">durumlarda</tspan> <tspan x="416.6" textLength="70.3" lengthAdjust="spacingAndGlyphs">aranmayı</tspan> <tspan x="491.1" textLength="94.6" lengthAdjust="spacingAndGlyphs">beklemeden</tspan> <tspan x="590.0" textLength="44.9" lengthAdjust="spacingAndGlyphs">mesai</tspan> <tspan x="639.1" textLength="55.8" lengthAdjust="spacingAndGlyphs">saatleri</tspan> <tspan x="699.2" textLength="45.5" lengthAdjust="spacingAndGlyphs">içinde</tspan> <tspan x="749.0" textLength="78.0" lengthAdjust="spacingAndGlyphs">PDRUYAM</tspan> <tspan x="831.2" textLength="50.6" lengthAdjust="spacingAndGlyphs">ofisine</tspan> <tspan x="886.1" textLength="72.8" lengthAdjust="spacingAndGlyphs">gelmeniz,</tspan></text>
<text y="405.5"><tspan x="290.2" textLength="44.9" lengthAdjust="spacingAndGlyphs">mesai</tspan> <tspan x="339.4" textLength="55.9" lengthAdjust="spacingAndGlyphs">saatleri</tspan> <tspan x="399.5" textLength="54.5" lengthAdjust="spacingAndGlyphs">dışında</tspan> <tspan x="458.2" textLength="21.0" lengthAdjust="spacingAndGlyphs">ise</tspan> <tspan x="483.4" textLength="19.2" lengthAdjust="spacingAndGlyphs">en</tspan> <tspan x="506.8" textLength="39.9" lengthAdjust="spacingAndGlyphs">yakın</tspan> <tspan x="550.9" textLength="42.3" lengthAdjust="spacingAndGlyphs">sağlık</tspan> <tspan x="597.4" textLength="84.7" lengthAdjust="spacingAndGlyphs">kuruluşuna</tspan> <tspan x="686.3" textLength="76.0" lengthAdjust="spacingAndGlyphs">ulaşmanız</tspan> <tspan x="766.5" textLength="57.9" lengthAdjust="spacingAndGlyphs">önerilir.</tspan></text>
<circle cx="287.800" cy="433.0" r="2.100" stroke="none"/>
<text y="438.2"><tspan x="291.6" textLength="60.8" lengthAdjust="spacingAndGlyphs">Başvuru</tspan> <tspan x="356.7" textLength="76.0" lengthAdjust="spacingAndGlyphs">formunun</tspan> <tspan x="436.9" textLength="65.5" lengthAdjust="spacingAndGlyphs">sonunda</tspan> <tspan x="506.7" textLength="46.6" lengthAdjust="spacingAndGlyphs">uygun</tspan> <tspan x="557.5" textLength="79.6" lengthAdjust="spacingAndGlyphs">olduğunuz</tspan> <tspan x="641.3" textLength="28.5" lengthAdjust="spacingAndGlyphs">gün</tspan> <tspan x="674.0" textLength="17.6" lengthAdjust="spacingAndGlyphs">ve</tspan> <tspan x="695.8" textLength="65.6" lengthAdjust="spacingAndGlyphs">saatlerin</tspan> <tspan x="765.7" textLength="76.2" lengthAdjust="spacingAndGlyphs">sorulduğu</tspan> <tspan x="846.1" textLength="58.1" lengthAdjust="spacingAndGlyphs">bölüme</tspan></text>
<text y="460.6"><tspan x="290.2" textLength="68.0" lengthAdjust="spacingAndGlyphs">mümkün</tspan> <tspan x="362.4" textLength="33.0" lengthAdjust="spacingAndGlyphs">olan</tspan> <tspan x="399.6" textLength="19.2" lengthAdjust="spacingAndGlyphs">en</tspan> <tspan x="423.0" textLength="35.0" lengthAdjust="spacingAndGlyphs">fazla</tspan> <tspan x="462.2" textLength="28.5" lengthAdjust="spacingAndGlyphs">gün</tspan> <tspan x="495.0" textLength="17.6" lengthAdjust="spacingAndGlyphs">ve</tspan> <tspan x="516.8" textLength="35.5" lengthAdjust="spacingAndGlyphs">saati</tspan> <tspan x="556.6" textLength="73.4" lengthAdjust="spacingAndGlyphs">belirtmek</tspan> <tspan x="634.2" textLength="62.3" lengthAdjust="spacingAndGlyphs">randevu</tspan> <tspan x="700.7" textLength="70.8" lengthAdjust="spacingAndGlyphs">sürecinizi</tspan> <tspan x="775.8" textLength="79.0" lengthAdjust="spacingAndGlyphs">hızlandırır.</tspan></text>
</g>
<g style="font-size:16.900px;fill:#222">
<circle cx="287.800" cy="487.6" r="2.300" stroke="none"/>
<text y="493.4"><tspan x="291.8" textLength="18.9" lengthAdjust="spacingAndGlyphs">İlk</tspan> <tspan x="315.3" textLength="105.7" lengthAdjust="spacingAndGlyphs">randevunuza</tspan> <tspan x="425.5" textLength="48.0" lengthAdjust="spacingAndGlyphs">haber</tspan> <tspan x="478.0" textLength="83.4" lengthAdjust="spacingAndGlyphs">vermeden</tspan> <tspan x="566.0" textLength="102.7" lengthAdjust="spacingAndGlyphs">gelmediğiniz</tspan> <tspan x="673.3" textLength="67.4" lengthAdjust="spacingAndGlyphs">takdirde</tspan> <tspan x="745.3" textLength="88.5" lengthAdjust="spacingAndGlyphs">PDRUYAM'</tspan> <tspan x="838.3" textLength="30.9" lengthAdjust="spacingAndGlyphs">dan</tspan> <tspan x="873.8" textLength="56.6" lengthAdjust="spacingAndGlyphs">yardım</tspan></text>
<text y="518.0"><tspan x="290.2" textLength="76.0" lengthAdjust="spacingAndGlyphs">almaktan</tspan> <tspan x="370.7" textLength="102.8" lengthAdjust="spacingAndGlyphs">vazgeçtiğiniz</tspan> <tspan x="478.1" textLength="83.2" lengthAdjust="spacingAndGlyphs">düşünülür</tspan> <tspan x="565.9" textLength="19.0" lengthAdjust="spacingAndGlyphs">ve</tspan> <tspan x="589.4" textLength="94.4" lengthAdjust="spacingAndGlyphs">başvurunuz</tspan> <tspan x="688.4" textLength="36.0" lengthAdjust="spacingAndGlyphs">iptal</tspan> <tspan x="728.9" textLength="44.7" lengthAdjust="spacingAndGlyphs">edilir.</tspan> <tspan x="778.2" textLength="21.6" lengthAdjust="spacingAndGlyphs">Bu</tspan> <tspan x="804.3" textLength="80.3" lengthAdjust="spacingAndGlyphs">durumda,</tspan></text>
<text y="542.3"><tspan x="290.2" textLength="90.5" lengthAdjust="spacingAndGlyphs">istiyorsanız</tspan> <tspan x="385.3" textLength="88.4" lengthAdjust="spacingAndGlyphs">PDRUYAM'</tspan> <tspan x="478.3" textLength="9.7" lengthAdjust="spacingAndGlyphs">a</tspan> <tspan x="492.5" textLength="67.9" lengthAdjust="spacingAndGlyphs">ulaşarak</tspan> <tspan x="565.0" textLength="104.9" lengthAdjust="spacingAndGlyphs">başvurunuzu</tspan> <tspan x="674.4" textLength="36.1" lengthAdjust="spacingAndGlyphs">aktif</tspan> <tspan x="715.1" textLength="34.9" lengthAdjust="spacingAndGlyphs">hale</tspan> <tspan x="754.6" textLength="72.9" lengthAdjust="spacingAndGlyphs">getirmek</tspan> <tspan x="832.0" textLength="35.7" lengthAdjust="spacingAndGlyphs">sizin</tspan></text>
<text y="566.8"><tspan x="290.2" textLength="177.2" lengthAdjust="spacingAndGlyphs">sorumluluğunuzdadır.</tspan></text>
</g>
</g>
<rect x="28.100" y="569.5" width="115.900" height="65.900" fill="#f4f4f4"/>
<rect x="28.600" y="570.0" width="115" height="65" fill="#fff"/>
<text x="9.600" y="577.7" textLength="12.800" lengthAdjust="spacingAndGlyphs" style="font-size:11.500px;fill:#4a4a4a">14</text>
<text x="30.3" y="580.9" textLength="43.6" lengthAdjust="spacingAndGlyphs" style="font-size:6.0px;fill:#7b4a3b;font-weight:bold;">Ulaşım ve İletişim</text>
<text x="31.7" y="592.0" textLength="94.3" lengthAdjust="spacingAndGlyphs" style="font-size:2.8px;fill:#5a5a5a;">Hafta içi her gün 08.00-17.00 saatleri arasında merkezimizi ziyaret edebilir,</text>
<text x="31.7" y="595.8" textLength="86.3" lengthAdjust="spacingAndGlyphs" style="font-size:2.8px;fill:#5a5a5a;">dilekçenizi vererek ya da web üzerinden randevu talebinizi iletebilirsiniz.</text>
<text x="31.7" y="600.7" textLength="72.3" lengthAdjust="spacingAndGlyphs" style="font-size:2.8px;fill:#5a5a5a;">Merkezimiz Atatürk Üniversitesi Merkez Kampüs Yerleşkesi</text>
<text x="31.7" y="606.5" textLength="92.3" lengthAdjust="spacingAndGlyphs" style="font-size:2.8px;fill:#5a5a5a;">PDRUYAM Danışma Birimimiz Rektörlük Binası Arka Kısmı Eski Mediko Binası Zemin Katta</text>
<text x="31.7" y="610.3" textLength="18.3" lengthAdjust="spacingAndGlyphs" style="font-size:2.8px;fill:#5a5a5a;">bulunmaktadır.</text>
<text x="31.7" y="615.9" textLength="23.3" lengthAdjust="spacingAndGlyphs" style="font-size:2.8px;fill:#333;font-weight:bold;">Tel: 0442 231 1468</text>
<text x="31.7" y="621.5" textLength="37.3" lengthAdjust="spacingAndGlyphs" style="font-size:2.8px;fill:#444;">Mail: atauniypdrm@gmail.com</text>
<text x="31.7" y="627.5" textLength="6.8" lengthAdjust="spacingAndGlyphs" style="font-size:2.8px;fill:#333;font-weight:bold;">web:</text>
<text x="39.0" y="627.5" textLength="38.0" lengthAdjust="spacingAndGlyphs" style="font-size:2.8px;fill:#c0324a;text-decoration:underline;">pdruyam.atauni.edu.tr</text>
</g>
<!-- slide -->
<rect x="273" y="203" width="695" height="391.500" fill="#f2f2f2"/>
<rect x="274" y="204" width="693" height="390" fill="#fff"/>
<g id="slidecontent">
<g style="font-weight:bold;font-size:32px;fill:#7b4a3b">
<text y="248.2"><tspan x="371.0" textLength="120.7" lengthAdjust="spacingAndGlyphs">Danışma</tspan> <tspan x="499.2" textLength="153.9" lengthAdjust="spacingAndGlyphs">Oturumları</tspan> <tspan x="660.6" textLength="130.2" lengthAdjust="spacingAndGlyphs">Hakkında</tspan> <tspan x="798.4" textLength="83.9" lengthAdjust="spacingAndGlyphs">Neleri</tspan></text>
<text y="284.3"><tspan x="546.4" textLength="160.8" lengthAdjust="spacingAndGlyphs">Bilmeliyim?</tspan></text>
</g>
<g style="font-size:15.500px;fill:#222;stroke:#222;stroke-width:0.150px">
<circle cx="287.800" cy="301.0" r="2.100" stroke="none"/>
<text y="306.4"><tspan x="291.6" textLength="88.1" lengthAdjust="spacingAndGlyphs">Başvurunuz</tspan> <tspan x="383.9" textLength="82.2" lengthAdjust="spacingAndGlyphs">PDRUYAM'</tspan> <tspan x="470.3" textLength="9.0" lengthAdjust="spacingAndGlyphs">a</tspan> <tspan x="483.6" textLength="74.0" lengthAdjust="spacingAndGlyphs">ulaştıktan</tspan> <tspan x="561.8" textLength="42.2" lengthAdjust="spacingAndGlyphs">sonra</tspan> <tspan x="608.3" textLength="68.0" lengthAdjust="spacingAndGlyphs">mümkün</tspan> <tspan x="680.5" textLength="33.0" lengthAdjust="spacingAndGlyphs">olan</tspan> <tspan x="717.8" textLength="19.2" lengthAdjust="spacingAndGlyphs">en</tspan> <tspan x="741.2" textLength="29.1" lengthAdjust="spacingAndGlyphs">kısa</tspan> <tspan x="774.6" textLength="68.7" lengthAdjust="spacingAndGlyphs">zamanda</tspan> <tspan x="847.6" textLength="20.7" lengthAdjust="spacingAndGlyphs">bir</tspan> <tspan x="872.5" textLength="70.7" lengthAdjust="spacingAndGlyphs">psikolojik</tspan></text>
<text y="329.0"><tspan x="290.2" textLength="83.1" lengthAdjust="spacingAndGlyphs">danışmana</tspan> <tspan x="377.5" textLength="91.6" lengthAdjust="spacingAndGlyphs">yönlendirilir</tspan> <tspan x="473.4" textLength="17.6" lengthAdjust="spacingAndGlyphs">ve</tspan> <tspan x="495.2" textLength="62.4" lengthAdjust="spacingAndGlyphs">randevu</tspan> <tspan x="561.9" textLength="26.4" lengthAdjust="spacingAndGlyphs">için</tspan> <tspan x="592.5" textLength="27.9" lengthAdjust="spacingAndGlyphs">size</tspan> <tspan x="624.7" textLength="57.0" lengthAdjust="spacingAndGlyphs">e-posta</tspan> <tspan x="685.9" textLength="34.7" lengthAdjust="spacingAndGlyphs">veya</tspan> <tspan x="724.8" textLength="53.9" lengthAdjust="spacingAndGlyphs">telefon</tspan> <tspan x="783.0" textLength="58.1" lengthAdjust="spacingAndGlyphs">aracılığı</tspan> <tspan x="845.3" textLength="17.9" lengthAdjust="spacingAndGlyphs">ile</tspan> <tspan x="867.4" textLength="31.6" lengthAdjust="spacingAndGlyphs">bilgi</tspan> <tspan x="903.3" textLength="46.4" lengthAdjust="spacingAndGlyphs">verilir.</tspan></text>
<text y="351.5"><tspan x="290.2" textLength="46.1" lengthAdjust="spacingAndGlyphs">Yoğun</tspan> <tspan x="340.6" textLength="93.0" lengthAdjust="spacingAndGlyphs">dönemlerde</tspan> <tspan x="437.8" textLength="62.4" lengthAdjust="spacingAndGlyphs">randevu</tspan> <tspan x="504.4" textLength="45.0" lengthAdjust="spacingAndGlyphs">süreci</tspan> <tspan x="553.6" textLength="24.7" lengthAdjust="spacingAndGlyphs">2-6</tspan> <tspan x="582.6" textLength="39.0" lengthAdjust="spacingAndGlyphs">hafta</tspan> <tspan x="625.9" textLength="64.9" lengthAdjust="spacingAndGlyphs">sürebilir.</tspan></text>
<circle cx="287.800" cy="378.5" r="2.100" stroke="none"/>
<text y="383.8"><tspan x="291.3" textLength="27.4" lengthAdjust="spacingAndGlyphs">Acil</tspan> <tspan x="322.9" textLength="89.4" lengthAdjust="spacingAndGlyphs">durumlarda</tspan> <tspan x="416.6" textLength="70.3" lengthAdjust="spacingAndGlyphs">aranmayı</tspan> <tspan x="491.1" textLength="94.6" lengthAdjust="spacingAndGlyphs">beklemeden</tspan> <tspan x="590.0" textLength="44.9" lengthAdjust="spacingAndGlyphs">mesai</tspan> <tspan x="639.1" textLength="55.8" lengthAdjust="spacingAndGlyphs">saatleri</tspan> <tspan x="699.2" textLength="45.5" lengthAdjust="spacingAndGlyphs">içinde</tspan> <tspan x="749.0" textLength="78.0" lengthAdjust="spacingAndGlyphs">PDRUYAM</tspan> <tspan x="831.2" textLength="50.6" lengthAdjust="spacingAndGlyphs">ofisine</tspan> <tspan x="886.1" textLength="72.8" lengthAdjust="spacingAndGlyphs">gelmeniz,</tspan></text>
<text y="405.5"><tspan x="290.2" textLength="44.9" lengthAdjust="spacingAndGlyphs">mesai</tspan> <tspan x="339.4" textLength="55.9" lengthAdjust="spacingAndGlyphs">saatleri</tspan> <tspan x="399.5" textLength="54.5" lengthAdjust="spacingAndGlyphs">dışında</tspan> <tspan x="458.2" textLength="21.0" lengthAdjust="spacingAndGlyphs">ise</tspan> <tspan x="483.4" textLength="19.2" lengthAdjust="spacingAndGlyphs">en</tspan> <tspan x="506.8" textLength="39.9" lengthAdjust="spacingAndGlyphs">yakın</tspan> <tspan x="550.9" textLength="42.3" lengthAdjust="spacingAndGlyphs">sağlık</tspan> <tspan x="597.4" textLength="84.7" lengthAdjust="spacingAndGlyphs">kuruluşuna</tspan> <tspan x="686.3" textLength="76.0" lengthAdjust="spacingAndGlyphs">ulaşmanız</tspan> <tspan x="766.5" textLength="57.9" lengthAdjust="spacingAndGlyphs">önerilir.</tspan></text>
<circle cx="287.800" cy="433.0" r="2.100" stroke="none"/>
<text y="438.2"><tspan x="291.6" textLength="60.8" lengthAdjust="spacingAndGlyphs">Başvuru</tspan> <tspan x="356.7" textLength="76.0" lengthAdjust="spacingAndGlyphs">formunun</tspan> <tspan x="436.9" textLength="65.5" lengthAdjust="spacingAndGlyphs">sonunda</tspan> <tspan x="506.7" textLength="46.6" lengthAdjust="spacingAndGlyphs">uygun</tspan> <tspan x="557.5" textLength="79.6" lengthAdjust="spacingAndGlyphs">olduğunuz</tspan> <tspan x="641.3" textLength="28.5" lengthAdjust="spacingAndGlyphs">gün</tspan> <tspan x="674.0" textLength="17.6" lengthAdjust="spacingAndGlyphs">ve</tspan> <tspan x="695.8" textLength="65.6" lengthAdjust="spacingAndGlyphs">saatlerin</tspan> <tspan x="765.7" textLength="76.2" lengthAdjust="spacingAndGlyphs">sorulduğu</tspan> <tspan x="846.1" textLength="58.1" lengthAdjust="spacingAndGlyphs">bölüme</tspan></text>
<text y="460.6"><tspan x="290.2" textLength="68.0" lengthAdjust="spacingAndGlyphs">mümkün</tspan> <tspan x="362.4" textLength="33.0" lengthAdjust="spacingAndGlyphs">olan</tspan> <tspan x="399.6" textLength="19.2" lengthAdjust="spacingAndGlyphs">en</tspan> <tspan x="423.0" textLength="35.0" lengthAdjust="spacingAndGlyphs">fazla</tspan> <tspan x="462.2" textLength="28.5" lengthAdjust="spacingAndGlyphs">gün</tspan> <tspan x="495.0" textLength="17.6" lengthAdjust="spacingAndGlyphs">ve</tspan> <tspan x="516.8" textLength="35.5" lengthAdjust="spacingAndGlyphs">saati</tspan> <tspan x="556.6" textLength="73.4" lengthAdjust="spacingAndGlyphs">belirtmek</tspan> <tspan x="634.2" textLength="62.3" lengthAdjust="spacingAndGlyphs">randevu</tspan> <tspan x="700.7" textLength="70.8" lengthAdjust="spacingAndGlyphs">sürecinizi</tspan> <tspan x="775.8" textLength="79.0" lengthAdjust="spacingAndGlyphs">hızlandırır.</tspan></text>
</g>
<g style="font-size:16.900px;fill:#222;stroke:#222;stroke-width:0.150px">
<circle cx="287.800" cy="487.6" r="2.300" stroke="none"/>
<text y="493.4"><tspan x="291.8" textLength="18.9" lengthAdjust="spacingAndGlyphs">İlk</tspan> <tspan x="315.3" textLength="105.7" lengthAdjust="spacingAndGlyphs">randevunuza</tspan> <tspan x="425.5" textLength="48.0" lengthAdjust="spacingAndGlyphs">haber</tspan> <tspan x="478.0" textLength="83.4" lengthAdjust="spacingAndGlyphs">vermeden</tspan> <tspan x="566.0" textLength="102.7" lengthAdjust="spacingAndGlyphs">gelmediğiniz</tspan> <tspan x="673.3" textLength="67.4" lengthAdjust="spacingAndGlyphs">takdirde</tspan> <tspan x="745.3" textLength="88.5" lengthAdjust="spacingAndGlyphs">PDRUYAM'</tspan> <tspan x="838.3" textLength="30.9" lengthAdjust="spacingAndGlyphs">dan</tspan> <tspan x="873.8" textLength="56.6" lengthAdjust="spacingAndGlyphs">yardım</tspan></text>
<text y="518.0"><tspan x="290.2" textLength="76.0" lengthAdjust="spacingAndGlyphs">almaktan</tspan> <tspan x="370.7" textLength="102.8" lengthAdjust="spacingAndGlyphs">vazgeçtiğiniz</tspan> <tspan x="478.1" textLength="83.2" lengthAdjust="spacingAndGlyphs">düşünülür</tspan> <tspan x="565.9" textLength="19.0" lengthAdjust="spacingAndGlyphs">ve</tspan> <tspan x="589.4" textLength="94.4" lengthAdjust="spacingAndGlyphs">başvurunuz</tspan> <tspan x="688.4" textLength="36.0" lengthAdjust="spacingAndGlyphs">iptal</tspan> <tspan x="728.9" textLength="44.7" lengthAdjust="spacingAndGlyphs">edilir.</tspan> <tspan x="778.2" textLength="21.6" lengthAdjust="spacingAndGlyphs">Bu</tspan> <tspan x="804.3" textLength="80.3" lengthAdjust="spacingAndGlyphs">durumda,</tspan></text>
<text y="542.3"><tspan x="290.2" textLength="90.5" lengthAdjust="spacingAndGlyphs">istiyorsanız</tspan> <tspan x="385.3" textLength="88.4" lengthAdjust="spacingAndGlyphs">PDRUYAM'</tspan> <tspan x="478.3" textLength="9.7" lengthAdjust="spacingAndGlyphs">a</tspan> <tspan x="492.5" textLength="67.9" lengthAdjust="spacingAndGlyphs">ulaşarak</tspan> <tspan x="565.0" textLength="104.9" lengthAdjust="spacingAndGlyphs">başvurunuzu</tspan> <tspan x="674.4" textLength="36.1" lengthAdjust="spacingAndGlyphs">aktif</tspan> <tspan x="715.1" textLength="34.9" lengthAdjust="spacingAndGlyphs">hale</tspan> <tspan x="754.6" textLength="72.9" lengthAdjust="spacingAndGlyphs">getirmek</tspan> <tspan x="832.0" textLength="35.7" lengthAdjust="spacingAndGlyphs">sizin</tspan></text>
<text y="566.8"><tspan x="290.2" textLength="177.2" lengthAdjust="spacingAndGlyphs">sorumluluğunuzdadır.</tspan></text>
</g>
</g>
<!-- text cursor -->
<path d="M310.800 386.500h4M312.800 386.500v13M310.800 399.500h4" stroke="#222" stroke-width="1.100" fill="none"/>
<!-- Zoom participants strip -->
<defs>
<linearGradient id="vbg" x1="0" y1="0" x2="1" y2="0"><stop offset="0" stop-color="#bebcb9"/><stop offset="0.300" stop-color="#c6cbc9"/><stop offset="0.650" stop-color="#c9d0ce"/><stop offset="1" stop-color="#b6aeaa"/></linearGradient>
<clipPath id="vclip"><path d="M1149 181.200v-80.200a8 8 0 0 1 8-8h142a8 8 0 0 1 8 8v80.200z"/></clipPath>
<clipPath id="p2clip"><rect x="1192.700" y="191.300" width="71.400" height="72" rx="4.500"/></clipPath>
<filter id="bl2" x="-20%" y="-20%" width="140%" height="140%"><feGaussianBlur stdDeviation="2.200"/></filter>
<filter id="bl05" x="-10%" y="-10%" width="120%" height="120%"><feGaussianBlur stdDeviation="0.450"/></filter>
<filter id="bl1" x="-20%" y="-20%" width="140%" height="140%"><feGaussianBlur stdDeviation="0.900"/></filter>
<path id="arcTop" d="M1205.800 312.300a21.200 21.200 0 0 1 42.400 0"/>
<path id="arcBot" d="M1203 312.300a24 24 0 0 0 48 0"/>
</defs>
<!-- tile 1 video -->
<path d="M1147.100 183v-83a9.200 9.200 0 0 1 9.200-9.200h143.700a9.200 9.200 0 0 1 9.200 9.200v83z" fill="#17e690"/>
<g clip-path="url(#vclip)">
<rect x="1149" y="93" width="158" height="90" fill="url(#vbg)"/>
<g filter="url(#bl2)">
<rect x="1213" y="104" width="18" height="11" fill="#8f9aa0"/>
<ellipse cx="1245" cy="126" rx="4" ry="9" fill="#9aa3a6"/>
<ellipse cx="1198" cy="143" rx="3" ry="6" fill="#a9b0b0"/>
</g>
<g filter="url(#bl1)">
<path d="M1200 150c-2-22 6-35 22-35s24 12 22 34l-2 22h-40z" fill="#57393a"/>
<path d="M1207.2 150.6C1207.7 139.7 1216.5 131.5 1229.5 126.7C1238.4 131.5 1242.5 141.0 1242.2 152.0C1241.8 162.9 1235.7 172.5 1225.4 173.2C1215.2 172.5 1207.7 162.9 1207.2 150.6z" fill="#c9a389"/>
<path d="M1204.2 149.2C1205.6 136.9 1216.5 126.0 1230.2 124.0C1239.8 127.4 1244.6 136.9 1244.1 149.2C1241.8 139.7 1237.0 132.8 1229.5 128.5C1217.9 132.8 1208.3 141.0 1204.2 149.2z" fill="#4a3032"/>
<ellipse cx="1218.2" cy="148.1" rx="4.300" ry="1.800" fill="#a98468"/><ellipse cx="1235.7" cy="148.1" rx="4.300" ry="1.800" fill="#a98468"/>
<path d="M1213.8 149.0Q1218.2 150.6 1222.7 148.7M1231.3 148.7Q1235.7 150.6 1240.2 149.0" stroke="#5e4032" stroke-width="1.200" fill="none"/>
<path d="M1225.4 153.3Q1227.5 158.8 1230.2 158.1" stroke="#b08a70" stroke-width="1.300" fill="none"/>
<path d="M1180 183c4-10 14-16 24-17l4 8c6 6 28 6 34 0l4-9c8 2 12 8 14 18z" fill="#37312f"/>
<path d="M1241 150l6 18l6 6" stroke="#2a2424" stroke-width="3" fill="none"/>
</g>
</g>
<rect x="1151" y="160.400" width="121" height="19.600" rx="4" fill="#2a2a2a" fill-opacity="0.770"/>
<text x="1154" y="174.500" textLength="114.700" lengthAdjust="spacingAndGlyphs" style="font-size:12.400px;fill:#fff">Seyma Bilgiz Öztürk</text>
<!-- tile 2 photo (b/w) -->
<g clip-path="url(#p2clip)">
<rect x="1192.700" y="191.300" width="71.400" height="72" fill="#ececec"/>
<g filter="url(#bl05)">
<polygon points="1194.9,194.2 1210.0,198.4 1210.0,250.5 1194.9,250.5" fill="#d8d8d8"/>
<polygon points="1195.4,207.3 1208.4,210.4 1208.4,216.1 1195.4,214.0" fill="#4a4a4a"/>
<polygon points="1195.4,214.0 1208.4,216.1 1208.4,219.2 1195.4,217.7" fill="#b9b9b9"/>
<polygon points="1195.9,227.1 1204.3,226.0 1204.3,246.3 1195.9,245.8" fill="#3a3a3a"/>
<polygon points="1197.3,229.1 1202.9,228.4 1202.9,244.2 1197.3,244.0" fill="#8e8e8e"/>
<polygon points="1205.3,219.2 1209.5,219.2 1209.5,250.5 1205.3,250.5" fill="#f6f6f6"/>
<polygon points="1194.9,193.7 1220.4,198.9 1219.4,202.1 1194.9,197.2" fill="#141414"/>
<polygon points="1194.9,197.9 1215.2,202.1 1214.2,204.7 1194.9,206.2" fill="#c9c9c9"/>
<polygon points="1239.4,193.7 1240.8,193.7 1240.8,202.6 1239.4,202.1" fill="#7a7a7a"/>
<polygon points="1241.2,194.2 1260.0,194.2 1260.0,201.5 1241.2,200.5" fill="#d2d2d2"/>
<path d="M1245.9 208.8Q1251.7 200.5 1260.2 206.8L1260.2 208.8" fill="none" stroke="#4a4a4a" stroke-width="1.300"/>
<path d="M1251.7 214.0Q1256.9 206.8 1259.5 215.1" fill="none" stroke="#bdbdbd" stroke-width="1"/>
<polygon points="1256.9,227.1 1259.4,227.1 1259.4,242.2 1256.9,242.2" fill="#4a4a4a"/>
<polygon points="1211.0,250.5 1219.4,246.3 1234.0,249.5 1243.3,242.2 1251.7,238.0 1264.2,246.3 1264.2,267.2 1211.0,267.2" fill="#cfcfcf"/>
<polygon points="1234.0,249.5 1243.3,242.2 1248.5,237.0 1252.7,246.3 1243.3,255.7" fill="#b4b4b4"/>
<polygon points="1230.8,246.3 1246.5,233.8 1248.5,242.2 1239.2,252.6" fill="#bdbdbd"/>
<path d="M1210.0 219.2C1211.0 208.8 1235.0 204.7 1243.3 217.2C1246.5 227.6 1243.3 240.1 1234.0 247.4C1226.7 251.5 1218.3 248.4 1215.2 240.1C1212.1 233.8 1209.5 227.6 1210.0 219.2z" fill="#dedede"/>
<path d="M1208.4 222.4C1207.4 210.9 1212.1 199.5 1226.7 197.9C1239.2 197.4 1246.5 208.8 1247.0 220.3C1247.3 226.5 1245.4 231.8 1244.6 234.4L1241.8 233.8C1241.8 227.6 1241.2 221.3 1237.1 214.0C1229.8 210.4 1219.4 211.4 1213.1 213.5C1210.5 216.1 1210.0 220.3 1210.5 226.5z" fill="#0e0e0e"/>
<ellipse cx="1246.2" cy="229.7" rx="2.200" ry="4" fill="#c4c4c4"/>
<path d="M1212.3 226.8Q1216.2 224.5 1220.9 225.7" fill="none" stroke="#1c1c1c" stroke-width="1.500"/>
<path d="M1225.1 223.9Q1230.8 221.1 1237.1 222.4" fill="none" stroke="#1c1c1c" stroke-width="1.600"/>
<path d="M1213.6 229.5Q1216.8 228.1 1219.9 229.1" fill="none" stroke="#2e2e2e" stroke-width="1.500"/>
<path d="M1226.7 226.8Q1230.8 225.0 1235.5 225.7" fill="none" stroke="#2e2e2e" stroke-width="1.600"/>
<path d="M1219.9 235.4Q1223.0 237.5 1226.7 235.4" fill="none" stroke="#a9a9a9" stroke-width="1.200"/>
<path d="M1218.3 242.2Q1225.6 244.8 1234.0 239.6" fill="none" stroke="#6e6e6e" stroke-width="1.300"/>
<ellipse cx="1226.7" cy="247.6" rx="5.500" ry="2.600" fill="#a4a4a4" transform="rotate(-15 1226.7 247.6)"/>
<path d="M1237.1 244.2Q1242.8 239.0 1243.9 232.8" fill="none" stroke="#b4b4b4" stroke-width="2.500"/>
<ellipse cx="1211.6" cy="243.0" rx="3" ry="2.800" fill="#1e1e1e"/>
<polygon points="1209.5,250.5 1212.6,246.3 1216.2,248.4 1219.4,252.6 1216.2,256.8 1209.5,256.8" fill="#2a2a2a"/>
</g>
<rect x="1194.500" y="193.100" width="67.800" height="68.400" rx="3" fill="none" stroke="#3a3a3a" stroke-opacity="0.550" stroke-width="1"/>
<rect x="1192.700" y="191.300" width="71.400" height="72" rx="4.500" fill="none" stroke="#f6f6f6" stroke-width="2.200"/>
</g>
<!-- tile 3 logo -->
<rect x="1192.700" y="281.300" width="71.400" height="72" rx="5.500" fill="#fff"/>
<circle cx="1227" cy="312.300" r="26" fill="#fff" stroke="#3a357a" stroke-width="0.700"/>
<circle cx="1227" cy="312.300" r="18.300" fill="none" stroke="#3a357a" stroke-width="0.500"/>
<circle cx="1227" cy="312.300" r="17.400" fill="#2d2869"/>
<text style="font-size:5.200px;font-weight:bold;fill:#2d2869;font-family:'Liberation Serif',serif;letter-spacing:0.300px"><textPath href="#arcTop" startOffset="50%" text-anchor="middle">Atatürk Üniversitesi</textPath></text>
<text style="font-size:5.200px;font-weight:bold;fill:#2d2869;font-family:'Liberation Serif',serif;letter-spacing:0.300px"><textPath href="#arcBot" startOffset="50%" text-anchor="middle">Atatürk University</textPath></text>
<circle cx="1205.300" cy="314.500" r="0.800" fill="#2d2869"/><circle cx="1248.700" cy="314.500" r="0.800" fill="#2d2869"/>
<g fill="#d9b36a">
<path d="M1227 300.500l2.500 2h-5z"/><rect x="1223.500" y="298.800" width="7" height="1.600" rx="0.800"/>
<rect x="1226.100" y="303" width="1.800" height="15.500"/><rect x="1224" y="304.500" width="1.200" height="13"/><rect x="1228.800" y="304.500" width="1.200" height="13"/>
<path d="M1222.500 320.500c0-2 9-2 9 0c0 3.500-2 5.500-4.500 5.500s-4.500-2-4.500-5.500z"/>
<path d="M1227 326v2.500" stroke="#d9b36a" stroke-width="1"/>
</g>
<g stroke="#d9b36a" stroke-width="1.500" stroke-linecap="round" fill="none">
<path d="M1221.500 305.500l-3.500-2.500M1220.500 308.500l-5-2M1220 311.500l-6-1M1220 314.500l-6 0.500M1220.500 317.300l-5.500 2M1221.500 320l-4 3"/>
<path d="M1232.500 305.500l3.500-2.500M1233.500 308.500l5-2M1234 311.500l6-1M1234 314.500l6 0.500M1233.500 317.300l5.500 2M1232.500 320l4 3"/>
</g>
<text x="1196" y="346.500" style="font-size:6px;font-weight:bold;fill:#d0202a">KiD</text>
<!-- big name -->
<text x="1169.700" y="411.800" textLength="116.800" lengthAdjust="spacingAndGlyphs" style="font-size:14.600px;font-weight:bold;fill:#fff">Berat Karadoğan</text>
<!-- tile 5 hat -->
<rect x="1192.400" y="461" width="72" height="72" rx="5.500" fill="#f5f5f5"/>
<path d="M1203.8 474.3C1212.0 467.3 1244.8 467.3 1253.2 473.5C1250.7 486.7 1248.3 500.7 1247.4 516.0L1210.2 516.0C1209.6 500.7 1207.3 486.7 1203.8 474.3z" fill="#050505"/>
<path d="M1198.5 517.1C1198.5 513.0 1203.8 510.1 1210.2 509.2L1247.7 510.1C1253.6 511.0 1257.1 513.6 1257.1 517.1C1257.1 522.4 1243.6 525.3 1227.8 525.3C1212.0 525.3 1198.5 522.4 1198.5 517.1z" fill="#050505"/>
<path d="M1209.9 476.7C1212.2 487.8 1214.1 499.5 1214.9 511.0" stroke="#f4f4f4" stroke-width="2.100" fill="none" stroke-linecap="round"/>
<path d="M1227.0 519.2C1235.4 519.2 1243.6 518.1 1248.1 516.2C1249.2 515.0 1249.5 513.6 1249.5 512.2" stroke="#f4f4f4" stroke-width="1.500" fill="none" stroke-linecap="round"/>
<!-- tile 6 Y -->
<rect x="1192.400" y="551.300" width="72" height="72" rx="5.500" fill="#512da8"/>
<text x="1228.400" y="601.500" text-anchor="middle" style="font-size:40px;fill:#fff">Y</text>
<!-- labels -->
<g fill="#2f3135" fill-opacity="0.780">
<rect x="1150.800" y="250.500" width="157.200" height="19.500" rx="4"/>
<rect x="1150.800" y="340.500" width="157.200" height="19.500" rx="4"/>
<rect x="1150.400" y="430.500" width="125" height="19.500" rx="4"/>
<rect x="1150.400" y="520.700" width="88" height="19.300" rx="4"/>
<rect x="1150.400" y="610.800" width="91.400" height="19.300" rx="4"/>
</g>
<g style="font-size:12.600px;fill:#fff">
<text x="1172.300" y="264.700" textLength="131.500" lengthAdjust="spacingAndGlyphs">Dr. Öğr. Üyesi Mehm...</text>
<text x="1172.300" y="354.700" textLength="134.400" lengthAdjust="spacingAndGlyphs">Kurumsal İletişim Dire...</text>
<text x="1172.300" y="444.800" textLength="98.600" lengthAdjust="spacingAndGlyphs">Berat Karadoğan</text>
<text x="1172.300" y="534.800" textLength="62.400" lengthAdjust="spacingAndGlyphs">Yusuf Kaya</text>
<text x="1172.300" y="624.900" textLength="65.400" lengthAdjust="spacingAndGlyphs">Eren Birhan</text>
</g>
<!-- muted mic icons -->
<g transform="translate(1160.400,260.2)"><rect x="-2.300" y="-6" width="4.600" height="8" rx="2.300" fill="#e0484d"/><path d="M-4 -0.500a4 4 0 0 0 8 0M0 3.500v2.300M-2.300 6h4.600" fill="none" stroke="#e0484d" stroke-width="1.100"/><path d="M-6 6.300l12.300-12.800" stroke="#2d2f33" stroke-width="2.600"/><path d="M-6.300 6.500l12.600-13" stroke="#e0484d" stroke-width="1.200"/></g>
<g transform="translate(1160.400,350.2)"><rect x="-2.300" y="-6" width="4.600" height="8" rx="2.300" fill="#e0484d"/><path d="M-4 -0.500a4 4 0 0 0 8 0M0 3.500v2.300M-2.300 6h4.600" fill="none" stroke="#e0484d" stroke-width="1.100"/><path d="M-6 6.300l12.300-12.800" stroke="#2d2f33" stroke-width="2.600"/><path d="M-6.300 6.500l12.600-13" stroke="#e0484d" stroke-width="1.200"/></g>
<g transform="translate(1160.400,440.3)"><rect x="-2.300" y="-6" width="4.600" height="8" rx="2.300" fill="#e0484d"/><path d="M-4 -0.500a4 4 0 0 0 8 0M0 3.500v2.300M-2.300 6h4.600" fill="none" stroke="#e0484d" stroke-width="1.100"/><path d="M-6 6.300l12.300-12.800" stroke="#2d2f33" stroke-width="2.600"/><path d="M-6.300 6.500l12.600-13" stroke="#e0484d" stroke-width="1.200"/></g>
<g transform="translate(1160.400,530.3)"><rect x="-2.300" y="-6" width="4.600" height="8" rx="2.300" fill="#e0484d"/><path d="M-4 -0.500a4 4 0 0 0 8 0M0 3.500v2.300M-2.300 6h4.600" fill="none" stroke="#e0484d" stroke-width="1.100"/><path d="M-6 6.300l12.300-12.800" stroke="#2d2f33" stroke-width="2.600"/><path d="M-6.300 6.500l12.600-13" stroke="#e0484d" stroke-width="1.200"/></g>
<g transform="translate(1160.400,620.4)"><rect x="-2.300" y="-6" width="4.600" height="8" rx="2.300" fill="#e0484d"/><path d="M-4 -0.500a4 4 0 0 0 8 0M0 3.500v2.300M-2.300 6h4.600" fill="none" stroke="#e0484d" stroke-width="1.100"/><path d="M-6 6.300l12.300-12.800" stroke="#2d2f33" stroke-width="2.600"/><path d="M-6.300 6.500l12.600-13" stroke="#e0484d" stroke-width="1.200"/></g>
<!-- Windows taskbar -->
<defs>
<linearGradient id="tbg" x1="0" y1="0" x2="1" y2="0"><stop offset="0" stop-color="#2d284f"/><stop offset="0.600" stop-color="#30294e"/><stop offset="1" stop-color="#332a4e"/></linearGradient>
<linearGradient id="edgeg" x1="0" y1="0" x2="0.300" y2="1"><stop offset="0" stop-color="#1f93e4"/><stop offset="0.500" stop-color="#1873cf"/><stop offset="1" stop-color="#0d50a2"/></linearGradient>
<linearGradient id="edgeg2" x1="0" y1="0.200" x2="1" y2="0.600"><stop offset="0" stop-color="#1f9fe8"/><stop offset="0.450" stop-color="#2cc3d3"/><stop offset="1" stop-color="#6fe454"/></linearGradient>
<linearGradient id="zmg" x1="0" y1="0" x2="0" y2="1"><stop offset="0" stop-color="#3b8bff"/><stop offset="1" stop-color="#0b4fe0"/></linearGradient>
</defs>
<rect x="0" y="727" width="1366" height="1.200" fill="#e9e9e9"/>
<rect x="0" y="728" width="1366" height="40" fill="url(#tbg)"/>
<rect x="807.800" y="728" width="76.200" height="40" fill="#5f5679"/>
<g fill="#76b9ed">
<rect x="191.900" y="766" width="69" height="2"/><rect x="269.700" y="766" width="69" height="2"/><rect x="347.500" y="766" width="69" height="2"/><rect x="424.800" y="766" width="69" height="2"/><rect x="502" y="766" width="69" height="2"/><rect x="579.700" y="766" width="69" height="2"/><rect x="657.200" y="766" width="68.600" height="2"/><rect x="735" y="766" width="68.700" height="2"/><rect x="807.800" y="766" width="76.200" height="2"/>
</g>
<!-- start -->
<path d="M15.400 742.300l7.200-1v6.900h-7.200zM23.500 741.100l9-1.300v8.400h-9zM15.400 749.100h7.200v6.900l-7.200-1zM23.500 749.100h9v8.400l-9-1.300z" fill="#fff"/>
<!-- search -->
<circle cx="74" cy="745.600" r="7.700" fill="none" stroke="#fff" stroke-width="1.900"/>
<path d="M68.600 751.400l-6.600 6.800" stroke="#fff" stroke-width="2.200" stroke-linecap="round"/>
<!-- task view -->
<g fill="none" stroke="#fff" stroke-width="1.400"><rect x="114.300" y="743.800" width="8.600" height="7.600"/><path d="M112 741h11.500M112 754.300h11.500M126.500 740.300v3M126.500 751.300v3.700"/></g>
<rect x="125.500" y="744.300" width="2.300" height="6" fill="#fff"/>
<!-- edge -->
<path d="M155.2 744.5C154.7 751.1 158.4 760.2 168.8 760.1C173.4 759.8 177.0 756.5 177.6 753.4C174.4 755.1 170.2 754.6 167.8 752.7C165.5 751.1 164.1 748.8 165.9 745.9L159.4 741.7z" fill="url(#edgeg)"/>
<circle cx="166.5" cy="748.2" r="2.300" fill="#262150"/>
<path d="M155.1 745.7C155.2 739.4 160.8 735.7 167.3 735.7C174.4 735.7 179.2 740.8 179.2 745.9C179.2 750.2 175.3 752.6 172.0 752.4C169.7 752.1 168.2 750.7 168.8 749.5C169.7 747.7 168.8 745.4 165.9 744.0C162.2 742.6 157.0 743.4 155.1 745.7z" fill="url(#edgeg2)"/>
<rect x="154.9" y="752.0" width="12.0" height="8.0" rx="0.500" fill="#c9770e"/><rect x="154.9" y="752.0" width="12.0" height="4.7" rx="0.500" fill="#f49a0c"/><rect x="159.4" y="750.6" width="3.3" height="1.4" fill="none" stroke="#4a3a18" stroke-width="0.800"/><rect x="160.1" y="755.3" width="1.700" height="1.700" fill="#ffd21c"/>
<!-- opera -->
<ellipse cx="205.900" cy="747.700" rx="11.400" ry="11" fill="#e8122e"/>
<ellipse cx="205.900" cy="747.700" rx="5" ry="8.300" fill="#2d284f"/>
<path d="M209.500 738c5 2 7.500 5.500 7.500 9.700s-2.500 7.700-7.500 9.700c2.300-2.500 3.400-5.700 3.400-9.700s-1.100-7.200-3.400-9.700z" fill="#a80a20"/>
<!-- download arrow -->
<path d="M279.300 738h9v9.500h5l-9.500 9.700-9.500-9.700h5z" fill="#3b9be8"/>
<path d="M361.9 748.0L351.7 742.1A11.8 11.8 0 0 1 372.1 742.1z" fill="#e33b2e"/><path d="M361.9 748.0L372.1 742.1A11.8 11.8 0 0 1 361.9 759.8z" fill="#fbc116"/><path d="M361.9 748.0L361.9 759.8A11.8 11.8 0 0 1 351.7 742.1z" fill="#2da94f"/><circle cx="361.9" cy="748.0" r="6.4" fill="#fff"/><circle cx="361.9" cy="748.0" r="4.8" fill="#3f7ee8"/>
<path d="M438.7 748.0L428.5 742.1A11.8 11.8 0 0 1 448.9 742.1z" fill="#e33b2e"/><path d="M438.7 748.0L448.9 742.1A11.8 11.8 0 0 1 438.7 759.8z" fill="#fbc116"/><path d="M438.7 748.0L438.7 759.8A11.8 11.8 0 0 1 428.5 742.1z" fill="#2da94f"/><circle cx="438.7" cy="748.0" r="6.4" fill="#fff"/><circle cx="438.7" cy="748.0" r="4.8" fill="#3f7ee8"/>
<path d="M515.9 748.0L505.7 742.1A11.8 11.8 0 0 1 526.1 742.1z" fill="#e33b2e"/><path d="M515.9 748.0L526.1 742.1A11.8 11.8 0 0 1 515.9 759.8z" fill="#fbc116"/><path d="M515.9 748.0L515.9 759.8A11.8 11.8 0 0 1 505.7 742.1z" fill="#2da94f"/><circle cx="515.9" cy="748.0" r="6.4" fill="#fff"/><circle cx="515.9" cy="748.0" r="4.8" fill="#3f7ee8"/>
<rect x="592.3" y="739" width="12" height="18" fill="#fff"/><path d="M595.8 742.500h7M595.8 745h7M595.8 747.500h7M595.8 750h7M595.8 752.500h7M595.8 755h7" stroke="#2b579a" stroke-width="1.100"/><path d="M582.8 739.500l13-2.500v22l-13-2.500z" fill="#2b579a"/><text x="585.0" y="752" textLength="8.600" lengthAdjust="spacingAndGlyphs" style="font-size:10px;font-weight:bold;fill:#fff">W</text>
<rect x="669.1" y="739" width="12" height="18" fill="#fff"/><path d="M672.6 742.500h7M672.6 745h7M672.6 747.500h7M672.6 750h7M672.6 752.500h7M672.6 755h7" stroke="#2b579a" stroke-width="1.100"/><path d="M659.6 739.500l13-2.500v22l-13-2.500z" fill="#2b579a"/><text x="661.8" y="752" textLength="8.600" lengthAdjust="spacingAndGlyphs" style="font-size:10px;font-weight:bold;fill:#fff">W</text>
<path d="M748.9 736.300c8.500 0 11.800 3.300 11.800 11.700s-3.300 11.700-11.800 11.700s-11.800-3.300-11.800-11.700s3.300-11.700 11.800-11.700z" fill="url(#zmg)"/><text x="740.7" y="752" textLength="16.400" lengthAdjust="spacingAndGlyphs" style="font-size:11.500px;font-weight:bold;fill:#fff">zm</text>
<path d="M825.8 736.300c8.500 0 11.800 3.300 11.800 11.700s-3.300 11.700-11.800 11.700s-11.800-3.300-11.800-11.700s3.300-11.700 11.800-11.700z" fill="url(#zmg)"/><text x="817.6" y="752" textLength="16.400" lengthAdjust="spacingAndGlyphs" style="font-size:11.500px;font-weight:bold;fill:#fff">zm</text>
<g style="font-size:11.500px;fill:#fff">
<text x="222.4" y="752" textLength="34.4" lengthAdjust="spacingAndGlyphs">Oper...</text>
<text x="300.3" y="752" textLength="35.4" lengthAdjust="spacingAndGlyphs">İndiri...</text>
<text x="378.2" y="752" textLength="33.4" lengthAdjust="spacingAndGlyphs">Chat...</text>
<text x="455.1" y="752" textLength="32.8" lengthAdjust="spacingAndGlyphs">Micr...</text>
<text x="532.4" y="752" textLength="36.4" lengthAdjust="spacingAndGlyphs">Psiko...</text>
<text x="610.2" y="752" textLength="29.4" lengthAdjust="spacingAndGlyphs">DER...</text>
<text x="686.9" y="752" textLength="33.8" lengthAdjust="spacingAndGlyphs">akad...</text>
<text x="765.2" y="752" textLength="29.3" lengthAdjust="spacingAndGlyphs">Zoo...</text>
<text x="842.0" y="752" textLength="29.8" lengthAdjust="spacingAndGlyphs">Zoo...</text>
</g>
<!-- system tray -->
<path d="M893 751l6.100-6.100 6.100 6.100" fill="none" stroke="#fff" stroke-width="1.300"/>
<circle cx="923.200" cy="747.500" r="8" fill="#f4f4f4"/><circle cx="923.200" cy="747.500" r="5.800" fill="#2d2869"/><circle cx="923.200" cy="747.500" r="7" fill="none" stroke="#2d2869" stroke-width="0.700" stroke-dasharray="1 1"/><path d="M920.500 746h5.400v3.500h-5.400zM921.500 744.500h3.400" stroke="#d9b36a" stroke-width="1" fill="none"/>
<circle cx="947.100" cy="747.500" r="8" fill="#d3202f"/><circle cx="947.100" cy="747.500" r="6.200" fill="#f4f4f4"/><rect x="939.500" y="745" width="15.200" height="5" fill="#d3202f"/><text x="941.300" y="749.600" textLength="11.600" lengthAdjust="spacingAndGlyphs" style="font-size:5px;font-weight:bold;fill:#fff">BGA</text>
<circle cx="968.600" cy="742.300" r="2.800" fill="#5a62c8"/><circle cx="975.300" cy="743.500" r="2.200" fill="#7b83eb"/><path d="M972.500 746.500h6.500v5c0 2.500-2 4-4 4h-2.500z" fill="#7b83eb"/><rect x="963" y="745.500" width="10.500" height="10.500" rx="1.500" fill="#4b53bc"/><text x="966" y="754" style="font-size:8px;font-weight:bold;fill:#fff">T</text><circle cx="975.300" cy="753" r="3.800" fill="#1fa33c"/><path d="M973.300 753l1.500 1.500 2.600-2.800" stroke="#fff" stroke-width="1" fill="none"/>
<circle cx="994.700" cy="747.500" r="7.600" fill="#c9c9c9"/><path d="M990 744c2-3 6-3 6 0s-3 3-2 6s-3 3-4-1z" fill="#e6e6e6"/><path d="M998 748c2 0 3 2 1 4z" fill="#e6e6e6"/>
<rect x="1010.700" y="739.500" width="16.300" height="16.300" rx="1.500" fill="#e8761c"/><path d="M1014.500 750.500h7.500c2 0 2 2.500 0 2.500h-7.500zM1015.500 748.500c-1-1.500 1-2.500 1-4M1018.500 748.500c-1-1.500 1-2.500 1-4.500" fill="none" stroke="#fff" stroke-width="1"/>
<path d="M1042.900 739.500c2.500 1.500 4.500 2 7 2c0 7-2 11.500-7 14c-5-2.500-7-7-7-14c2.500 0 4.500-0.500 7-2z" fill="#fff"/><path d="M1042.900 740v15M1036.300 747.500h13.200" stroke="#222" stroke-width="0.900"/><path d="M1047.800 748l4.400 8h-8.800z" fill="#f7c81e"/><rect x="1047.400" y="750.800" width="0.900" height="3" fill="#222"/><rect x="1047.400" y="754.300" width="0.900" height="0.900" fill="#222"/>
<rect x="1060" y="740" width="14" height="10.500" fill="#8a8a8a" stroke="#444" stroke-width="0.800"/><rect x="1060.500" y="752" width="5.500" height="2.600" fill="#9a9a9a"/><rect x="1068" y="752" width="5.500" height="2.600" fill="#9a9a9a"/>
<g fill="none" stroke="#e6e6e6" stroke-width="1.100"><rect x="1086.300" y="744.500" width="7.500" height="10.500" rx="1"/><rect x="1087.800" y="740.300" width="4.500" height="4.200"/><path d="M1093.800 753.800l1.500 1.500 3-3.300" stroke="#bdbdbd"/></g>
<path d="M1107.800 745h3.500l5-4.500v14l-5-4.500h-3.500z" fill="#e2543c"/><path d="M1118.500 743.500q2.500 4 0 8M1120.800 741.800q3.500 5.700 0 11.400" fill="none" stroke="#8a2a1c" stroke-width="1"/>
<g fill="none" stroke="#e6e6e6" stroke-width="1.100"><rect x="1135.300" y="744.300" width="6.500" height="6.500" rx="1"/><path d="M1141.800 746.500l2.700-1.500v5l-2.700-1.500M1135.500 741.500q3.500-1.500 7 0M1135.500 753.500q3.500 1.500 7 0"/></g>
<rect x="1159.700" y="740" width="5.200" height="10.500" rx="2.600" fill="#f0f0f0"/><path d="M1157.300 747.500v1.500a5 5 0 0 0 10 0v-1.500M1162.300 754v2.300M1159.500 756.300h5.600" fill="none" stroke="#f0f0f0" stroke-width="1.100"/>
<g fill="none" stroke="#f0f0f0" stroke-width="1.100"><rect x="1183.500" y="744.500" width="10.500" height="7.200"/><path d="M1194.800 746.500v3.200M1179.300 746.500h3M1180 744v2.500M1182 744v2.500M1180.800 749v2.500q0 1.500 2 1.500"/></g><rect x="1185" y="746" width="5.500" height="4.200" fill="#f0f0f0"/>
<g fill="none" stroke="#f0f0f0" stroke-width="1.100"><rect x="1205.800" y="742.300" width="12.700" height="8.800"/><path d="M1212 751.100v3.200M1208.500 754.700h7"/><rect x="1203.500" y="741.800" width="3.200" height="4.200" fill="#2e244f"/><path d="M1205.100 746v3"/></g>
<path d="M1227.200 745.300h2.600l4-3.600v12.200l-4-3.600h-2.600z" fill="none" stroke="#f0f0f0" stroke-width="1.100" stroke-linejoin="round"/><path d="M1236 745q1.700 2.800 0 5.600M1238.500 743q3 4.800 0 9.600" fill="none" stroke="#f0f0f0" stroke-width="1"/><path d="M1241.200 741.300q4 6.500 0 13" fill="none" stroke="#8a86a0" stroke-width="1"/>
<text x="1266.700" y="742.600" textLength="26.300" lengthAdjust="spacingAndGlyphs" style="font-size:10.800px;fill:#fff">14:18</text>
<text x="1253" y="760.500" textLength="53.500" lengthAdjust="spacingAndGlyphs" style="font-size:10.800px;fill:#fff">25.11.2025</text>
<path d="M1324.700 740h16.600v11.500h-10.800l-3.800 3.800v-3.800h-2z" fill="#f4f4f4"/><path d="M1327.500 743.500h11M1327.500 746h11M1327.500 748.500h7" stroke="#2e244f" stroke-width="1"/>
<circle cx="1340.200" cy="755.300" r="7.700" fill="#25232e" stroke="#4a465a" stroke-width="0.800"/><text x="1337.200" y="759.300" style="font-size:10.500px;font-weight:bold;fill:#fff">3</text>
<rect x="1360.800" y="728" width="0.800" height="40" fill="#6a6480"/>
</svg>
</body>
</html>
